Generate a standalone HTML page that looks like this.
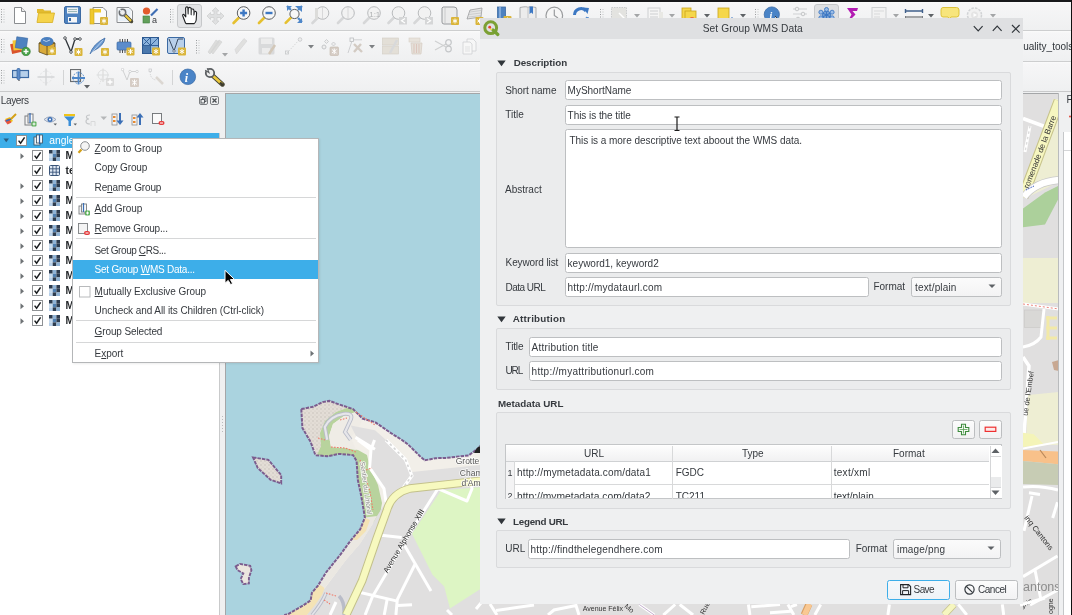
<!DOCTYPE html><html><head><meta charset="utf-8"><style>
html,body{margin:0;padding:0;width:1072px;height:615px;overflow:hidden;background:#eff0f1;font-family:"Liberation Sans", sans-serif;}
body>div,body>span,body>svg{position:absolute;}
span{white-space:nowrap;}
body{will-change:transform;}
</style></head><body>
<div style="left:0px;top:0px;width:1072px;height:2px;background:#18191b"></div>
<div style="left:0px;top:2px;width:1072px;height:28px;background:linear-gradient(#fbfbfb 0px,#f6f6f7 2px,#eff0f1 100%)"></div>
<div style="left:0px;top:30px;width:1072px;height:1px;background:#cdcecf"></div>
<div style="left:0px;top:31px;width:1072px;height:30px;background:linear-gradient(#fbfbfb 0px,#f6f6f7 2px,#eff0f1 100%)"></div>
<div style="left:0px;top:61px;width:1072px;height:1px;background:#cdcecf"></div>
<div style="left:0px;top:62px;width:1072px;height:29px;background:linear-gradient(#fbfbfb 0px,#f6f6f7 2px,#eff0f1 100%)"></div>
<div style="left:0px;top:91px;width:1072px;height:1px;background:#c8c9ca"></div>
<svg style="left:1px;top:9px;" width="4" height="16" viewBox="0 0 4 16"><rect x="0" y="0" width="1" height="1" fill="#9a9c9e"/><rect x="2.5" y="0" width="1" height="1" fill="#c4c6c8"/><rect x="0" y="2.5" width="1" height="1" fill="#9a9c9e"/><rect x="2.5" y="2.5" width="1" height="1" fill="#c4c6c8"/><rect x="0" y="5.0" width="1" height="1" fill="#9a9c9e"/><rect x="2.5" y="5.0" width="1" height="1" fill="#c4c6c8"/><rect x="0" y="7.5" width="1" height="1" fill="#9a9c9e"/><rect x="2.5" y="7.5" width="1" height="1" fill="#c4c6c8"/><rect x="0" y="10.0" width="1" height="1" fill="#9a9c9e"/><rect x="2.5" y="10.0" width="1" height="1" fill="#c4c6c8"/><rect x="0" y="12.5" width="1" height="1" fill="#9a9c9e"/><rect x="2.5" y="12.5" width="1" height="1" fill="#c4c6c8"/></svg>
<svg style="left:13px;top:6px;" width="14" height="19" viewBox="0 0 14 19"><path d="M1.5 1.5 H8.5 L12.5 5.5 V17.5 H1.5 Z" fill="#fff" stroke="#8a8d90" stroke-width="1"/><path d="M8.5 1.5 V5.5 H12.5" fill="#eee" stroke="#8a8d90" stroke-width="1"/></svg>
<svg style="left:36px;top:7px;" width="20" height="17" viewBox="0 0 20 17"><path d="M1 2 H7 L8.5 3.5 H15 V6 H1 Z" fill="#e2bb2f"/><path d="M2.5 6 H18.5 L16.5 15.5 H1 Z" fill="#f5d34a" stroke="#d6ae22" stroke-width="0.8"/></svg>
<svg style="left:64px;top:6px;" width="17" height="18" viewBox="0 0 17 18"><rect x="0.5" y="0.5" width="16" height="17" rx="1.5" fill="#4e82c0" stroke="#3c6aa3"/><rect x="3" y="1.5" width="11" height="6" fill="#eceff3"/><path d="M4 3.5 H13 M4 5.5 H13" stroke="#8aa" stroke-width="0.8"/><rect x="4" y="11" width="9" height="5.5" fill="#f4f5f7"/><rect x="5" y="12" width="2" height="3" fill="#3c6aa3"/></svg>
<svg style="left:89px;top:6px;" width="20" height="20" viewBox="0 0 20 20"><path d="M4 1.5 H14 L17.5 5 V17.5 H4 Z" fill="#fbfbfb" stroke="#8a8d90"/><rect x="1" y="3" width="4" height="15" fill="#f0c92d" stroke="#c9a31c" stroke-width="0.6"/><rect x="5" y="3" width="7" height="3.5" fill="#f0c92d"/><rect x="11" y="11" width="8" height="8" rx="1" fill="#dab53a"/><path d="M15 12.5 V17.5 M12.8 13.8 L17.2 16.2 M17.2 13.8 L12.8 16.2" stroke="#fff" stroke-width="1"/></svg>
<svg style="left:116px;top:6px;" width="19" height="19" viewBox="0 0 19 19"><path d="M1 1.5 H13 L16.5 5 V16.5 H1 Z" fill="#f8f8f8" stroke="#8a8d90"/><rect x="2.5" y="3" width="12" height="12" fill="#e8f0f8"/><path d="M8 8 L15.5 15.5" stroke="#4a4836" stroke-width="3.4" stroke-linecap="round"/><path d="M8 8 L15 15" stroke="#ecc93c" stroke-width="2"/><circle cx="6.5" cy="6.5" r="3.2" fill="#eee" stroke="#6a6d70" stroke-width="1.5"/><path d="M2.5 3.8 L6.8 6.8 L3.8 2.5 Z" fill="#e8f0f8"/></svg>
<svg style="left:142px;top:6px;" width="17" height="19" viewBox="0 0 17 19"><circle cx="4.5" cy="5" r="3.6" fill="#e35b2c"/><path d="M9 9.5 L15.5 3" stroke="#3f6eb4" stroke-width="2.2"/><rect x="1" y="10" width="6.5" height="7" fill="#62a05a" stroke="#3e7e3d" stroke-width="0.6"/><text x="10" y="17" font-size="9" font-family="Liberation Sans" fill="#3a3d40">a</text></svg>
<svg style="left:170px;top:9px;" width="4" height="16" viewBox="0 0 4 16"><rect x="0" y="0" width="1" height="1" fill="#9a9c9e"/><rect x="2.5" y="0" width="1" height="1" fill="#c4c6c8"/><rect x="0" y="2.5" width="1" height="1" fill="#9a9c9e"/><rect x="2.5" y="2.5" width="1" height="1" fill="#c4c6c8"/><rect x="0" y="5.0" width="1" height="1" fill="#9a9c9e"/><rect x="2.5" y="5.0" width="1" height="1" fill="#c4c6c8"/><rect x="0" y="7.5" width="1" height="1" fill="#9a9c9e"/><rect x="2.5" y="7.5" width="1" height="1" fill="#c4c6c8"/><rect x="0" y="10.0" width="1" height="1" fill="#9a9c9e"/><rect x="2.5" y="10.0" width="1" height="1" fill="#c4c6c8"/><rect x="0" y="12.5" width="1" height="1" fill="#9a9c9e"/><rect x="2.5" y="12.5" width="1" height="1" fill="#c4c6c8"/></svg>
<div style="left:177px;top:4px;width:25px;height:24px;background:#e3e4e6;border:1px solid #c6c8ca;border-radius:3px;box-sizing:border-box"></div>
<svg style="left:181px;top:5px;" width="17" height="20" viewBox="0 0 17 20"><path d="M4.5 18 L1.8 11 Q1.2 9.2 2.8 9.3 L4.8 11.8 L4.6 3.2 Q5.2 1.2 6.8 2.2 L7.2 9 L7.6 2.8 Q9.2 1.8 10.2 3.4 L10.2 9.6 L10.6 4.4 Q12.1 3.4 12.9 5.2 L12.9 10 L13.4 6.6 Q15 5.8 15.6 7.8 L15.2 15 Q14.8 17.6 13.2 18.6 L5.2 18.6 Z" fill="#fff" stroke="#1f2123" stroke-width="1.1" stroke-linejoin="round"/><path d="M7.2 9 V3.5 M10.2 9.6 V4 M12.9 10 V6" stroke="#9a9c9e" stroke-width="0.6"/></svg>
<svg style="left:206px;top:7px;" width="19" height="18" viewBox="0 0 19 18"><path d="M9.5 0.5 L13 4 H11 V7.5 H14.5 V5.5 L18 9 L14.5 12.5 V10.5 H11 V14 H13 L9.5 17.5 L6 14 H8 V10.5 H4.5 V12.5 L1 9 L4.5 5.5 V7.5 H8 V4 H6 Z" fill="#dfe0e1" stroke="#cfd0d1" stroke-width="0.8"/></svg>
<svg style="left:231px;top:5px;" width="20" height="21" viewBox="0 0 20 21"><path d="M8.064 12.536 L2.564 18.036" stroke="#e5c02f" stroke-width="2.6" stroke-linecap="round"/><circle cx="12.6" cy="8" r="6.3" fill="#f7f7f7" stroke="#5c5f62" stroke-width="1"/><path d="M12.6 4.5 V11.5 M9.1 8 H16.1" stroke="#3d78c3" stroke-width="2.4"/></svg>
<svg style="left:257px;top:5px;" width="20" height="21" viewBox="0 0 20 21"><path d="M7.464 12.536 L1.9640000000000004 18.036" stroke="#e5c02f" stroke-width="2.6" stroke-linecap="round"/><circle cx="12" cy="8" r="6.3" fill="#f7f7f7" stroke="#5c5f62" stroke-width="1"/><path d="M8.5 8 H15.5" stroke="#3d78c3" stroke-width="2.4"/></svg>
<svg style="left:283px;top:5px;" width="21" height="21" viewBox="0 0 21 21"><path d="M4 1 H9 L4 6 Z M12 1 H19 V7 Z M19 13 V18 H14 Z" fill="#4e87c9"/><path d="M4 1 V6" stroke="#4e87c9" stroke-width="0"/><path d="M8.188 12.312 L2.6880000000000006 17.811999999999998" stroke="#e5c02f" stroke-width="2.6" stroke-linecap="round"/><circle cx="11.5" cy="9" r="4.6" fill="#f7f7f7" stroke="#5c5f62" stroke-width="1"/><path d="M4 1 L8 5" stroke="#4e87c9" stroke-width="2.2"/><path d="M19 1 L15 5 M19 17 L15 13" stroke="#4e87c9" stroke-width="2.2"/></svg>
<svg style="left:309px;top:5px;" width="21" height="21" viewBox="0 0 21 21"><path d="M8.964 12.536 L3.4640000000000004 18.036" stroke="#d6d7d8" stroke-width="2.6" stroke-linecap="round"/><circle cx="13.5" cy="8" r="6.3" fill="#f2f2f2" stroke="#b9bbbd" stroke-width="1"/><path d="M13.5 2 V14" stroke="#d0d1d2" stroke-width="0.8"/><rect x="6" y="3" width="3" height="11" fill="#dcdcda"/></svg>
<svg style="left:335px;top:5px;" width="21" height="21" viewBox="0 0 21 21"><path d="M8.464 12.536 L2.9640000000000004 18.036" stroke="#d6d7d8" stroke-width="2.6" stroke-linecap="round"/><circle cx="13" cy="8" r="6.3" fill="#f2f2f2" stroke="#b9bbbd" stroke-width="1"/><path d="M13 2 V14" stroke="#d0d1d2" stroke-width="0.8"/></svg>
<svg style="left:361px;top:5px;" width="21" height="21" viewBox="0 0 21 21"><path d="M8.464 12.536 L2.9640000000000004 18.036" stroke="#d6d7d8" stroke-width="2.6" stroke-linecap="round"/><circle cx="13" cy="8" r="6.3" fill="#f2f2f2" stroke="#b9bbbd" stroke-width="1"/><text x="8.2" y="11.5" font-size="8" font-family="Liberation Sans" fill="#b0b2b4">1:1</text></svg>
<svg style="left:386px;top:5px;" width="21" height="21" viewBox="0 0 21 21"><path d="M7.964 12.536 L2.4640000000000004 18.036" stroke="#d6d7d8" stroke-width="2.6" stroke-linecap="round"/><circle cx="12.5" cy="8" r="6.3" fill="#f2f2f2" stroke="#b9bbbd" stroke-width="1"/><rect x="13" y="12" width="8" height="7.5" fill="#d5d6d7"/><path d="M19 13.5 L15.5 15.75 L19 18" fill="none" stroke="#fff" stroke-width="1.2"/></svg>
<svg style="left:412px;top:5px;" width="21" height="21" viewBox="0 0 21 21"><path d="M7.964 12.536 L2.4640000000000004 18.036" stroke="#d6d7d8" stroke-width="2.6" stroke-linecap="round"/><circle cx="12.5" cy="8" r="6.3" fill="#f2f2f2" stroke="#b9bbbd" stroke-width="1"/><rect x="13" y="12" width="8" height="7.5" fill="#d5d6d7"/><path d="M15 13.5 L18.5 15.75 L15 18" fill="none" stroke="#fff" stroke-width="1.2"/></svg>
<svg style="left:441px;top:6px;" width="20" height="20" viewBox="0 0 20 20"><path d="M2 1 H13 Q16 1 16 4 V16 Q16 18 13 18 H3 Q1 18 1 16 V2 Z" fill="#ebebeb" stroke="#8d9093" stroke-width="0.9"/><path d="M4 2 V17" stroke="#c9cacb" stroke-width="1"/><rect x="10" y="11" width="8" height="8" rx="1" fill="#dab53a"/><path d="M14 12.5 V17.5 M11.8 13.8 L16.2 16.2 M16.2 13.8 L11.8 16.2" stroke="#fff" stroke-width="1"/></svg>
<svg style="left:466px;top:6px;" width="18" height="20" viewBox="0 0 18 20"><path d="M4 4 L16 2 L15 11 L1 13 Z" fill="#e6e6e6" stroke="#9a9c9e" stroke-width="0.8"/><path d="M4 6 L15 4.5 M3 8.5 L15 7 M2.5 11 L15 9.5" stroke="#b8babc" stroke-width="0.6"/><rect x="9.5" y="11" width="8" height="8" rx="1" fill="#dab53a"/><path d="M13.5 12.5 V17.5 M11.3 13.8 L15.7 16.2 M15.7 13.8 L11.3 16.2" stroke="#fff" stroke-width="1"/></svg>
<svg style="left:496px;top:6px;" width="18" height="14" viewBox="0 0 18 14"><rect x="1.5" y="1" width="8" height="14" fill="#4e82c0" stroke="#3c6aa3" stroke-width="0.8"/><rect x="3" y="1" width="2" height="13" fill="#82a9d8"/><rect x="7.5" y="10" width="8" height="8" rx="1" fill="#dab53a"/><path d="M11.5 11.5 V16.5 M9.3 12.8 L13.7 15.2 M13.7 12.8 L9.3 15.2" stroke="#fff" stroke-width="1"/></svg>
<svg style="left:519px;top:6px;" width="18" height="14" viewBox="0 0 18 14"><path d="M1 1.5 Q8 0 9 1.5 Q10 0 17 1.5 V15 H1 Z" fill="#ececec" stroke="#9a9c9e" stroke-width="0.8"/><path d="M9 1.5 V15" stroke="#c2c4c6"/><path d="M10.5 0.5 H14 V8 L12.25 6.5 L10.5 8 Z" fill="#3d78c3"/></svg>
<svg style="left:545px;top:6px;" width="19" height="14" viewBox="0 0 19 14"><circle cx="9.3" cy="9.5" r="8.3" fill="#f6f6f6" stroke="#9a9c9e" stroke-width="1.2"/><path d="M9.3 3.5 V9.5 L13 12" fill="none" stroke="#9a9c9e" stroke-width="1.2"/></svg>
<svg style="left:572px;top:6px;" width="18" height="14" viewBox="0 0 18 14"><path d="M2.5 9 A6.5 6.5 0 0 1 14 5" fill="none" stroke="#3d78c3" stroke-width="3"/><path d="M11 1.5 L17 2 L15.5 8 Z" fill="#3d78c3"/><path d="M15.5 11 A6.5 6.5 0 0 1 4 14" fill="none" stroke="#5a8fd0" stroke-width="3"/></svg>
<svg style="left:600px;top:9px;" width="4" height="10" viewBox="0 0 4 10"><rect x="0" y="0" width="1" height="1" fill="#9a9c9e"/><rect x="2.5" y="0" width="1" height="1" fill="#c4c6c8"/><rect x="0" y="2.5" width="1" height="1" fill="#9a9c9e"/><rect x="2.5" y="2.5" width="1" height="1" fill="#c4c6c8"/><rect x="0" y="5.0" width="1" height="1" fill="#9a9c9e"/><rect x="2.5" y="5.0" width="1" height="1" fill="#c4c6c8"/><rect x="0" y="7.5" width="1" height="1" fill="#9a9c9e"/><rect x="2.5" y="7.5" width="1" height="1" fill="#c4c6c8"/></svg>
<svg style="left:610px;top:6px;" width="19" height="14" viewBox="0 0 19 14"><rect x="1.5" y="1.5" width="15" height="15" fill="#e3e3e0" stroke="#c5c7c9" stroke-dasharray="1.5 1" stroke-width="0.9"/><path d="M9 7 L16 14" stroke="#fff" stroke-width="1.5"/></svg>
<svg style="left:634px;top:14px;" width="7" height="4" viewBox="0 0 7 4"><path d="M0 0 L6 0 L3 3.5 Z" fill="#a3a5a7"/></svg>
<svg style="left:647px;top:7px;" width="17" height="13" viewBox="0 0 17 13"><rect x="1" y="1" width="12" height="14" fill="#f5f5f5" stroke="#cdcfd1"/><path d="M3 4 H11 M3 7 H11 M3 10 H11" stroke="#cdcfd1"/><rect x="12" y="5" width="4" height="10" fill="#e8e8e4"/></svg>
<svg style="left:669px;top:14px;" width="7" height="4" viewBox="0 0 7 4"><path d="M0 0 L6 0 L3 3.5 Z" fill="#a3a5a7"/></svg>
<svg style="left:681px;top:7px;" width="18" height="13" viewBox="0 0 18 13"><rect x="1" y="1" width="9" height="13" fill="#f5d74a" stroke="#c9a31c" stroke-width="0.8"/><rect x="4" y="4" width="11" height="11" fill="#f5d74a" stroke="#c9a31c" stroke-width="0.8"/><circle cx="11" cy="14" r="3" fill="none" stroke="#e53d3d" stroke-width="1.3"/></svg>
<svg style="left:704px;top:14px;" width="7" height="4" viewBox="0 0 7 4"><path d="M0 0 L6 0 L3 3.5 Z" fill="#5e6266"/></svg>
<svg style="left:717px;top:7px;" width="20" height="13" viewBox="0 0 20 13"><rect x="1" y="1" width="11" height="14" fill="#f5d74a" stroke="#c9a31c" stroke-width="0.8"/><path d="M12 14 L15 11 L18 14" fill="none" stroke="#3d78c3" stroke-width="1.5"/></svg>
<svg style="left:740px;top:14px;" width="7" height="4" viewBox="0 0 7 4"><path d="M0 0 L6 0 L3 3.5 Z" fill="#5e6266"/></svg>
<svg style="left:755px;top:9px;" width="4" height="10" viewBox="0 0 4 10"><rect x="0" y="0" width="1" height="1" fill="#9a9c9e"/><rect x="2.5" y="0" width="1" height="1" fill="#c4c6c8"/><rect x="0" y="2.5" width="1" height="1" fill="#9a9c9e"/><rect x="2.5" y="2.5" width="1" height="1" fill="#c4c6c8"/><rect x="0" y="5.0" width="1" height="1" fill="#9a9c9e"/><rect x="2.5" y="5.0" width="1" height="1" fill="#c4c6c8"/><rect x="0" y="7.5" width="1" height="1" fill="#9a9c9e"/><rect x="2.5" y="7.5" width="1" height="1" fill="#c4c6c8"/></svg>
<svg style="left:763px;top:6px;" width="18" height="14" viewBox="0 0 18 14"><circle cx="8.8" cy="8.5" r="7.6" fill="#4a84c7" stroke="#3a6aa5" stroke-width="0.8"/><text x="6.5" y="13" font-size="10" font-weight="bold" font-style="italic" font-family="Liberation Serif" fill="#fff">i</text><path d="M12 10 L17 15 L13 14" fill="#fff" stroke="#222" stroke-width="0.8"/></svg>
<svg style="left:791px;top:6px;" width="18" height="14" viewBox="0 0 18 14"><path d="M2 3 H16 M2 8 H16 M2 13 H16" stroke="#cfd1d3" stroke-width="1"/><circle cx="6" cy="3" r="1.8" fill="#f0f0f0" stroke="#c5c7c9"/><circle cx="12" cy="8" r="1.8" fill="#f0f0f0" stroke="#c5c7c9"/><circle cx="7" cy="13" r="1.8" fill="#f0f0f0" stroke="#c5c7c9"/></svg>
<div style="left:814px;top:3.5px;width:24.5px;height:24px;background:#dfe0e2;border:1px solid #c6c8ca;border-radius:3px;box-sizing:border-box"></div>
<svg style="left:817px;top:5px;" width="19" height="15" viewBox="0 0 19 15"><circle cx="9.5" cy="10" r="4" fill="#7ea6d8" stroke="#3d78c3" stroke-width="1"/><path d="M9.5 10 L9.5 4.5" stroke="#3d78c3" stroke-width="1.2"/><circle cx="9.5" cy="4.5" r="2" fill="#9bbce6" stroke="#3d78c3" stroke-width="0.9"/><path d="M9.5 10 L15.1 7.2" stroke="#3d78c3" stroke-width="1.2"/><circle cx="15.1" cy="7.2" r="2" fill="#9bbce6" stroke="#3d78c3" stroke-width="0.9"/><path d="M9.5 10 L15.1 12.8" stroke="#3d78c3" stroke-width="1.2"/><circle cx="15.1" cy="12.8" r="2" fill="#9bbce6" stroke="#3d78c3" stroke-width="0.9"/><path d="M9.5 10 L9.5 15.5" stroke="#3d78c3" stroke-width="1.2"/><circle cx="9.5" cy="15.5" r="2" fill="#9bbce6" stroke="#3d78c3" stroke-width="0.9"/><path d="M9.5 10 L3.9 12.8" stroke="#3d78c3" stroke-width="1.2"/><circle cx="3.9" cy="12.8" r="2" fill="#9bbce6" stroke="#3d78c3" stroke-width="0.9"/><path d="M9.5 10 L3.9 7.2" stroke="#3d78c3" stroke-width="1.2"/><circle cx="3.9" cy="7.2" r="2" fill="#9bbce6" stroke="#3d78c3" stroke-width="0.9"/></svg>
<svg style="left:845px;top:6px;" width="15" height="14" viewBox="0 0 15 14"><path d="M2 2 H13 L12 5 H7.5 L10.5 8.5 L5 14 H3.5 L6.5 8.5 Z" fill="#b31bb3"/></svg>
<svg style="left:871px;top:6px;" width="17" height="14" viewBox="0 0 17 14"><rect x="1" y="1.5" width="14" height="13" fill="#f2f2f2" stroke="#cfd1d3"/><path d="M3 5 H13 M3 8 H9 M3 11 H9" stroke="#d8d9da"/></svg>
<svg style="left:892.5px;top:14px;" width="7" height="4" viewBox="0 0 7 4"><path d="M0 0 L6 0 L3 3.5 Z" fill="#a3a5a7"/></svg>
<svg style="left:904px;top:6px;" width="20" height="14" viewBox="0 0 20 14"><path d="M1.5 5 H18.5 M1.5 3 V7 M18.5 3 V7" stroke="#3f5f8a" stroke-width="1.4"/><rect x="1" y="10" width="18" height="6" fill="#7b7e81"/><path d="M3 10 V13 M5 10 V12 M7 10 V13 M9 10 V12 M11 10 V13 M13 10 V12 M15 10 V13 M17 10 V12" stroke="#eee" stroke-width="0.7"/></svg>
<svg style="left:928px;top:14px;" width="7" height="4" viewBox="0 0 7 4"><path d="M0 0 L6 0 L3 3.5 Z" fill="#5e6266"/></svg>
<svg style="left:940px;top:6px;" width="20" height="14" viewBox="0 0 20 14"><path d="M3 1.5 H16.5 Q19 1.5 19 4 V8.5 Q19 11 16.5 11 H11 L9.5 13 L8 11 H3 Q1 11 1 8.5 V4 Q1 1.5 3 1.5 Z" fill="#f7e57c" stroke="#d9bd2c" stroke-width="0.9"/></svg>
<svg style="left:965px;top:6px;" width="19" height="14" viewBox="0 0 19 14"><circle cx="9.5" cy="9" r="7" fill="#f1f1f1" stroke="#d1d3d5" stroke-width="1.5" stroke-dasharray="2.5 1.2"/><circle cx="9.5" cy="9" r="3.5" fill="#e4e4e4"/><path d="M8.5 7 L12 9 L8.5 11 Z" fill="#fff"/></svg>
<svg style="left:990px;top:14px;" width="7" height="4" viewBox="0 0 7 4"><path d="M0 0 L6 0 L3 3.5 Z" fill="#a3a5a7"/></svg>
<svg style="left:1px;top:39px;" width="4" height="15" viewBox="0 0 4 15"><rect x="0" y="0" width="1" height="1" fill="#9a9c9e"/><rect x="2.5" y="0" width="1" height="1" fill="#c4c6c8"/><rect x="0" y="2.5" width="1" height="1" fill="#9a9c9e"/><rect x="2.5" y="2.5" width="1" height="1" fill="#c4c6c8"/><rect x="0" y="5.0" width="1" height="1" fill="#9a9c9e"/><rect x="2.5" y="5.0" width="1" height="1" fill="#c4c6c8"/><rect x="0" y="7.5" width="1" height="1" fill="#9a9c9e"/><rect x="2.5" y="7.5" width="1" height="1" fill="#c4c6c8"/><rect x="0" y="10.0" width="1" height="1" fill="#9a9c9e"/><rect x="2.5" y="10.0" width="1" height="1" fill="#c4c6c8"/><rect x="0" y="12.5" width="1" height="1" fill="#9a9c9e"/><rect x="2.5" y="12.5" width="1" height="1" fill="#c4c6c8"/></svg>
<svg style="left:10px;top:36px;" width="21" height="20" viewBox="0 0 21 20"><rect x="1" y="7" width="10" height="10" fill="#d9532b" transform="rotate(-12 6 12)"/><rect x="3" y="4" width="10" height="10" fill="#f3c634" transform="rotate(-6 8 9)"/><rect x="6" y="1.5" width="11" height="11" fill="#4e82c0" stroke="#3c6aa3" stroke-width="0.6" transform="rotate(8 11.5 7)"/><circle cx="16" cy="15.5" r="4.3" fill="#4aa34a" stroke="#2f7a2f" stroke-width="0.6"/><path d="M16 13 V18 M13.5 15.5 H18.5" stroke="#fff" stroke-width="1.5"/></svg>
<svg style="left:37px;top:36px;" width="20" height="20" viewBox="0 0 20 20"><path d="M2 7 L10 4 L18 7 V16 L10 19 L2 16 Z" fill="#d9aa3a" stroke="#5a4a1e" stroke-width="0.8"/><path d="M10 10 V19 M2 7 L10 10 L18 7" stroke="#5a4a1e" stroke-width="0.8" fill="none"/><ellipse cx="10" cy="5.5" rx="6.5" ry="4.5" fill="#4a7fbf"/><path d="M6 4 Q9 7 13 4" stroke="#b8d0ec" stroke-width="1" fill="none"/><rect x="11" y="11" width="8" height="8" rx="1" fill="#dab53a"/><path d="M15 12.5 V17.5 M12.8 13.8 L17.2 16.2 M17.2 13.8 L12.8 16.2" stroke="#fff" stroke-width="1"/></svg>
<svg style="left:63px;top:36px;" width="20" height="20" viewBox="0 0 20 20"><path d="M2 2 L8 16 L12 3 L17 3" fill="none" stroke="#31363b" stroke-width="1.3"/><circle cx="2" cy="2" r="1.3" fill="#fff" stroke="#31363b" stroke-width="0.8"/><circle cx="12" cy="3" r="1.3" fill="#fff" stroke="#31363b" stroke-width="0.8"/><circle cx="17" cy="3" r="1.3" fill="#fff" stroke="#31363b" stroke-width="0.8"/><circle cx="8" cy="16" r="1.3" fill="#fff" stroke="#31363b" stroke-width="0.8"/><rect x="11.5" y="12" width="8" height="8" rx="1" fill="#dab53a"/><path d="M15.5 13.5 V18.5 M13.3 14.8 L17.7 17.2 M17.7 14.8 L13.3 17.2" stroke="#fff" stroke-width="1"/></svg>
<svg style="left:89px;top:36px;" width="20" height="20" viewBox="0 0 20 20"><path d="M1 18 Q4 8 16 2 Q15 10 4 15 Z" fill="#6b9ad2" stroke="#3c6aa3" stroke-width="0.8"/><path d="M2 17.5 L14 4" stroke="#d6e4f4" stroke-width="0.7"/><rect x="12" y="12" width="8" height="8" rx="1" fill="#dab53a"/><path d="M16 13.5 V18.5 M13.8 14.8 L18.2 17.2 M18.2 14.8 L13.8 17.2" stroke="#fff" stroke-width="1"/></svg>
<svg style="left:116px;top:37px;" width="19" height="19" viewBox="0 0 19 19"><rect x="1" y="5" width="14" height="8" rx="1" fill="#5b8ccc" stroke="#3c6aa3" stroke-width="0.7"/><path d="M4 2 V5 M6.5 2 V5 M9 2 V5 M11.5 2 V5 M4 13 V16 M6.5 13 V16 M9 13 V16" stroke="#3a3d40" stroke-width="0.9"/><rect x="10.5" y="10.5" width="8" height="8" rx="1" fill="#dab53a"/><path d="M14.5 12.0 V17.0 M12.3 13.3 L16.7 15.7 M16.7 13.3 L12.3 15.7" stroke="#fff" stroke-width="1"/></svg>
<svg style="left:142px;top:37px;" width="19" height="19" viewBox="0 0 19 19"><rect x="0.5" y="0.5" width="16" height="16" fill="#8db4dd" stroke="#2d5a92" stroke-width="1"/><path d="M8.5 0.5 V16.5 M0.5 8.5 H16.5 M1 1 L8 8 M8 1 L1 8 M9 8 L16 1" stroke="#2d5a92" stroke-width="0.9"/><rect x="1" y="9" width="7" height="7" fill="#4a78ad"/><rect x="10" y="10.5" width="8" height="8" rx="1" fill="#dab53a"/><path d="M14 12.0 V17.0 M11.8 13.3 L16.2 15.7 M16.2 13.3 L11.8 15.7" stroke="#fff" stroke-width="1"/></svg>
<svg style="left:167px;top:37px;" width="20" height="19" viewBox="0 0 20 19"><rect x="0.5" y="0.5" width="17" height="16" rx="1.5" fill="#b9d0ea" stroke="#3c6aa3" stroke-width="1"/><path d="M2 2 L7 14 L11 2 L16 2" fill="none" stroke="#3a4a60" stroke-width="1"/><circle cx="7" cy="14" r="1.2" fill="#fff" stroke="#3a4a60" stroke-width="0.7"/><rect x="11" y="10.5" width="8" height="8" rx="1" fill="#dab53a"/><path d="M15 12.0 V17.0 M12.8 13.3 L17.2 15.7 M17.2 13.3 L12.8 15.7" stroke="#fff" stroke-width="1"/></svg>
<svg style="left:196px;top:40px;" width="4" height="14" viewBox="0 0 4 14"><rect x="0" y="0" width="1" height="1" fill="#9a9c9e"/><rect x="2.5" y="0" width="1" height="1" fill="#c4c6c8"/><rect x="0" y="2.5" width="1" height="1" fill="#9a9c9e"/><rect x="2.5" y="2.5" width="1" height="1" fill="#c4c6c8"/><rect x="0" y="5.0" width="1" height="1" fill="#9a9c9e"/><rect x="2.5" y="5.0" width="1" height="1" fill="#c4c6c8"/><rect x="0" y="7.5" width="1" height="1" fill="#9a9c9e"/><rect x="2.5" y="7.5" width="1" height="1" fill="#c4c6c8"/><rect x="0" y="10.0" width="1" height="1" fill="#9a9c9e"/><rect x="2.5" y="10.0" width="1" height="1" fill="#c4c6c8"/><rect x="0" y="12.5" width="1" height="1" fill="#9a9c9e"/><rect x="2.5" y="12.5" width="1" height="1" fill="#c4c6c8"/></svg>
<svg style="left:207px;top:37px;" width="19" height="19" viewBox="0 0 19 19"><path d="M3 17 L1 15 L9 3 L12 5 Z M6 17 L4 15 L12 3 L15 5 Z" fill="#dcdcdb" stroke="#d0d1d2" stroke-width="0.6"/></svg>
<svg style="left:221.5px;top:53px;" width="7" height="4" viewBox="0 0 7 4"><path d="M0 0 L6 0 L3 3.5 Z" fill="#a3a5a7"/></svg>
<svg style="left:234px;top:37px;" width="15" height="19" viewBox="0 0 15 19"><path d="M2.5 17 L1 12.5 L10 1.5 L13 4 Z" fill="#e0e0df" stroke="#d3d4d5" stroke-width="0.6"/></svg>
<svg style="left:258px;top:37px;" width="19" height="19" viewBox="0 0 19 19"><rect x="0.5" y="0.5" width="16" height="17" rx="1.5" fill="#d9dadb"/><rect x="3" y="1.5" width="11" height="5.5" fill="#ececec"/><rect x="4" y="11" width="8" height="5.5" fill="#ececec"/><path d="M11 17 L17 8" stroke="#d2c7b8" stroke-width="2.5"/></svg>
<svg style="left:285px;top:37px;" width="18" height="18" viewBox="0 0 18 18"><path d="M2 16 L15 2" stroke="#cfd0d1" stroke-width="0.8" stroke-dasharray="1.5 1.2"/><rect x="0.5" y="14" width="3" height="3" fill="none" stroke="#c5c7c9" stroke-width="0.8"/><circle cx="15" cy="2.5" r="1.8" fill="#eee" stroke="#c5c7c9" stroke-width="0.8"/></svg>
<svg style="left:308px;top:45px;" width="7" height="4" viewBox="0 0 7 4"><path d="M0 0 L6 0 L3 3.5 Z" fill="#7d8083"/></svg>
<svg style="left:320px;top:37px;" width="19" height="19" viewBox="0 0 19 19"><circle cx="4" cy="10" r="2" fill="#eee" stroke="#c5c7c9"/><path d="M6.5 2.5 L8.5 4.5 L6.5 6.5 L4.5 4.5 Z M13.5 5 L15.5 7 L13.5 9 L11.5 7 Z" fill="#eee" stroke="#c5c7c9" stroke-width="0.8"/><rect x="10" y="10" width="8.5" height="8.5" rx="1" fill="#d6cdc6" stroke="#c4b8ad" stroke-width="0.6"/><path d="M14.25 11.5 V17 M12 12.5 L16.5 16 M16.5 12.5 L12 16" stroke="#fff" stroke-width="1"/></svg>
<svg style="left:347px;top:37px;" width="17" height="19" viewBox="0 0 17 19"><rect x="3" y="1" width="3.5" height="3.5" fill="none" stroke="#bbbdbf" stroke-width="0.8"/><path d="M6.5 2.8 H15 M4.8 4.5 L1 16" stroke="#c5c7c9" stroke-width="0.8"/><path d="M7 7 L15 15 M14 7 L7 15" stroke="#d3cbc3" stroke-width="2.4"/></svg>
<svg style="left:369px;top:45px;" width="7" height="4" viewBox="0 0 7 4"><path d="M0 0 L6 0 L3 3.5 Z" fill="#7d8083"/></svg>
<svg style="left:382px;top:37px;" width="18" height="18" viewBox="0 0 18 18"><rect x="0.5" y="1" width="16" height="7" fill="#e3dfd7" stroke="#d2cdc3" stroke-width="0.6"/><rect x="0.5" y="9" width="16" height="8" fill="#e3dfd7" stroke="#d2cdc3" stroke-width="0.6"/><path d="M8 16 L15 3" stroke="#d8d9da" stroke-width="2.5"/></svg>
<svg style="left:408px;top:37px;" width="16" height="18" viewBox="0 0 16 18"><rect x="1" y="1" width="11" height="4" fill="#e8e3dc" stroke="#d8cfc6" stroke-width="0.6"/><path d="M3 6 H14 L13 17 H4 Z" fill="#e5e0d9" stroke="#d6ccc2" stroke-width="0.7"/><path d="M6 7 V16 M8.5 7 V16 M11 7 V16" stroke="#d9b9b0" stroke-width="0.7"/></svg>
<svg style="left:434px;top:39px;" width="19" height="14" viewBox="0 0 19 14"><path d="M1 2 L12 8 M1 11 L12 5" stroke="#cfd0d1" stroke-width="1.1"/><circle cx="14.5" cy="3.5" r="2.8" fill="none" stroke="#c5c7c9" stroke-width="1.2"/><circle cx="14.5" cy="10" r="2.8" fill="none" stroke="#c5c7c9" stroke-width="1.2"/></svg>
<svg style="left:462px;top:38px;" width="15" height="17" viewBox="0 0 15 17"><path d="M5 1 H11 L14 4 V13 H5 Z" fill="#f7f7f7" stroke="#cfd1d3" stroke-width="0.8"/><path d="M1 4 H8 L10 6 V16 H1 Z" fill="#f7f7f7" stroke="#cfd1d3" stroke-width="0.8"/><path d="M3 9 H8 M3 11 H8 M3 13 H8" stroke="#d5d7d9" stroke-width="0.7"/></svg>
<span style="left:1017.7px;top:40.89px;font-size:10px;line-height:11.50px;font-weight:normal;color:#31363b;">quality_tools</span>
<svg style="left:1px;top:70px;" width="4" height="15" viewBox="0 0 4 15"><rect x="0" y="0" width="1" height="1" fill="#9a9c9e"/><rect x="2.5" y="0" width="1" height="1" fill="#c4c6c8"/><rect x="0" y="2.5" width="1" height="1" fill="#9a9c9e"/><rect x="2.5" y="2.5" width="1" height="1" fill="#c4c6c8"/><rect x="0" y="5.0" width="1" height="1" fill="#9a9c9e"/><rect x="2.5" y="5.0" width="1" height="1" fill="#c4c6c8"/><rect x="0" y="7.5" width="1" height="1" fill="#9a9c9e"/><rect x="2.5" y="7.5" width="1" height="1" fill="#c4c6c8"/><rect x="0" y="10.0" width="1" height="1" fill="#9a9c9e"/><rect x="2.5" y="10.0" width="1" height="1" fill="#c4c6c8"/><rect x="0" y="12.5" width="1" height="1" fill="#9a9c9e"/><rect x="2.5" y="12.5" width="1" height="1" fill="#c4c6c8"/></svg>
<svg style="left:12px;top:68px;" width="18" height="14" viewBox="0 0 18 14"><rect x="0.5" y="2.5" width="16" height="7" fill="#b7d0ea" stroke="#3c6aa3" stroke-width="1.2"/><rect x="5" y="0.5" width="3" height="11" rx="1" fill="#5b8ccc" stroke="#3c6aa3" stroke-width="0.8"/><path d="M6 12 L7 13 L8 12" stroke="#5e6266" stroke-width="0.7" fill="none"/></svg>
<svg style="left:37px;top:68px;" width="19" height="19" viewBox="0 0 19 19"><circle cx="9" cy="9" r="6" fill="none" stroke="#e3e4e5" stroke-width="1" stroke-dasharray="2 1.5"/><path d="M9 0.5 V17.5 M0.5 9 H17.5" stroke="#d5d6d7" stroke-width="1.4"/></svg>
<div style="left:62.5px;top:70px;width:1px;height:15px;background:#d3d4d5"></div>
<svg style="left:70px;top:69px;" width="20" height="19" viewBox="0 0 20 19"><rect x="0.5" y="0.5" width="10" height="12" fill="none" stroke="#6a6d70" stroke-width="1.2"/><circle cx="8.5" cy="9" r="5.5" fill="none" stroke="#4e87c9" stroke-width="1" stroke-dasharray="1.5 1"/><path d="M8.5 2.5 V15.5 M2 9 H15" stroke="#4e87c9" stroke-width="1.8"/></svg>
<svg style="left:84px;top:84.5px;" width="7" height="4" viewBox="0 0 7 4"><path d="M0 0 L6 0 L3 3.5 Z" fill="#5e6266"/></svg>
<svg style="left:96px;top:68px;" width="19" height="19" viewBox="0 0 19 19"><circle cx="7" cy="7" r="5" fill="none" stroke="#dfe0e1" stroke-width="1"/><path d="M7 0.5 V14 M0.5 7 H13" stroke="#dcdddd" stroke-width="1.2"/><path d="M7 8 L3 17" stroke="#e0e0e0" stroke-dasharray="1.5 1"/><rect x="10" y="10" width="8" height="8" rx="1" fill="#dcdcdc"/><path d="M14 11.5 V16.5 M11.5 14 H16.5" stroke="#fff" stroke-width="1.4"/></svg>
<svg style="left:121px;top:68px;" width="19" height="19" viewBox="0 0 19 19"><path d="M1.5 1.5 L6 12 L9 3.5 H16" fill="none" stroke="#d0d1d2" stroke-width="1"/><circle cx="1.5" cy="1.5" r="1.2" fill="#fff" stroke="#c5c7c9" stroke-width="0.7"/><circle cx="9" cy="3.5" r="1.2" fill="#fff" stroke="#c5c7c9" stroke-width="0.7"/><circle cx="16" cy="3.5" r="1.2" fill="#fff" stroke="#c5c7c9" stroke-width="0.7"/><rect x="9" y="10" width="9" height="9" rx="1" fill="#d6cdc6"/><path d="M13.5 11.5 V17.5 M11 12.5 L16 16.5 M16 12.5 L11 16.5" stroke="#fff" stroke-width="1"/></svg>
<svg style="left:148px;top:68px;" width="17" height="19" viewBox="0 0 17 19"><rect x="1" y="1" width="2.5" height="2.5" fill="none" stroke="#c5c7c9" stroke-width="0.7"/><path d="M2.2 3.5 Q2 11 8 12" fill="none" stroke="#d0d1d2" stroke-dasharray="1.2 1"/><path d="M8 9 L15 16" stroke="#dbd7d2" stroke-width="2.5"/></svg>
<div style="left:172px;top:70px;width:1px;height:15px;background:#d3d4d5"></div>
<svg style="left:179px;top:68px;" width="18" height="18" viewBox="0 0 18 18"><circle cx="8.8" cy="8.8" r="7.8" fill="#4a84c7" stroke="#3a6aa5" stroke-width="0.7"/><text x="5.8" y="13.8" font-size="12" font-weight="bold" font-style="italic" font-family="Liberation Serif" fill="#fff">i</text></svg>
<svg style="left:204px;top:67px;" width="21" height="20" viewBox="0 0 21 20"><path d="M8 8 L18.5 17.5" stroke="#4a4836" stroke-width="4.4" stroke-linecap="round"/><path d="M8 8 L18 17" stroke="#ecc93c" stroke-width="2.6"/><path d="M16 15.5 L19 18.5" stroke="#3a3a30" stroke-width="2.4"/><circle cx="6" cy="6" r="4.2" fill="#eeeeee" stroke="#5a5d60" stroke-width="1.8"/><path d="M0 2.5 L6.2 6.2 L2.5 0 Z" fill="#f1f2f3"/><path d="M1.2 3.2 L5 5.6 L3.2 1.2" fill="none" stroke="#5a5d60" stroke-width="1.1"/></svg>
<svg style="left:225px;top:93px" width="834" height="522" viewBox="225 93 834 522"><defs><pattern id="rk" width="4" height="4" patternUnits="userSpaceOnUse"><rect width="4" height="4" fill="#e3ddd6"/><circle cx="1" cy="1" r="0.7" fill="#c2bcb5"/><circle cx="3" cy="3" r="0.6" fill="#cfc9c2"/></pattern></defs><rect x="225" y="92" width="834" height="523" fill="#aad3df"/><path d="M301.3 409.1 L313 406.8 L322.5 402.1 L329.5 400.9 L339 404.4 L353.1 409.1 L362.5 418.6 L375 422.1 L391.9 433.7 L402 440 L408.2 444.6 L420 456.2 L424.9 460.3 L435.5 458.2 L446 457.9 L468.7 455.4 L478.5 448 L482 444 L482 615 L284.2 615 L288 614.3 L303.1 605.5 L310.6 600.5 L311.9 592.9 L318.2 585.3 L325.8 572.7 L340.9 553.9 L351 540 L360.2 529.3 L364.9 517.5 L361.3 496.3 L357.8 479.8 L356.6 461 L353.1 455.1 L339 453.9 L327.2 456.3 L315.4 455.1 L310.7 442.1 L302.4 428 L301.3 409.1 Z" fill="#f2efe9"/><path d="M301.3 409.1 L313 406.8 L322.5 402.1 L329.5 400.9 L339 404.4 L348 407.5 L336 412 L325 421 L320 433 L321 446 L317 455 L310.7 442.1 L302.4 428 Z" fill="url(#rk)"/><path d="M348 407.5 L353.1 409.1 L356 412 L344 416 L333 424 L329 436 L331 447 L345 448 L358 450 L367 455 L370 468 L378 485 L382 503 L379 520 L370 524 L364.9 517.5 L361.3 496.3 L357.8 479.8 L356.6 461 L353.1 455.1 L339 453.9 L327.2 456.3 L317 455 L321 446 L320 433 L325 421 L336 412 Z" fill="#b8d39d"/><path d="M331 447 L329 436 L333 424 L344 416 L356 412 L362.5 418.6 L358 430 L350.7 437 L356 450 L345 448 Z" fill="#efece6"/><path d="M350.7 425.6 L375 430.3 L386 440 L405.4 459.5 L411.9 475.7 L403 488 L386 501.7 L384 488.7 L369.6 467.6 L371 449.7 L358 440 Z" fill="#e0dfdf"/><path d="M412 472 L480 465 L482 480 L408 489 L403 488 Z" fill="#e0dfdf"/><path d="M392 500 L408.6 492 L482 484.7 L482 615 L343 615 L358 585 L372 548 L384 512 Z" fill="#e0dfdf"/><path d="M386 501.7 L383 515 L372 548 L358 585 L343 615 L306.9 615 L323.2 590.4 L346 560 L360 543.8 L372 525 L377 516 Z" fill="#e0dfdf"/><path d="M364.9 517.5 L377 516 L372 525 L360 543.8 L346 560 L324.5 587.9 L318.2 585.3 L325.8 572.7 L340.9 553.9 L351 540 L360.2 529.3 Z" fill="#ebe8e2"/><path d="M364.9 517.5 L370 520 L366 531 L357 540 L351 540 L360.2 529.3 Z" fill="#f4e3b5"/><path d="M320.7 585.3 L324.5 588 L322 595 L315 605 L306.9 615 L284.2 615 L288 614.3 L303.1 605.5 L310.6 600.5 L311.9 592.9 L318.2 585.3 Z" fill="#f4e3b5"/><path d="M441 490.4 L482 487 L482 588 L450 608.4 L444.2 586.5 L432.5 574.8 L412 533.8 Z" fill="#ddf5c4"/><path d="M253 457.4 L268.3 459.8 L281.2 475.1 L281.2 483.4 L270.6 479.8 L257.7 468 Z" fill="url(#rk)" stroke="#7b5c8e" stroke-width="1.9" stroke-dasharray="3.5 1"/><path d="M235.7 566.4 L240.1 563.9 L250.2 565.8 L251.4 570.2 L248.9 577.8 L248.9 583.5 L243.3 584.1 L240.7 579 L243.3 573.4 L237.6 570.2 Z" fill="#ebe6df" stroke="#7b5c8e" stroke-width="1.9" stroke-dasharray="3.5 1"/><path d="M301.3 409.1 L313 406.8 L322.5 402.1 L329.5 400.9 L339 404.4 L353.1 409.1 L362.5 418.6 L375 422.1 L391.9 433.7 L402 440 L408.2 444.6 L420 456.2 L424.9 460.3 L435.5 458.2 L446 457.9 L468.7 455.4 L478.5 448 L482 444" fill="none" stroke="#7b5c8e" stroke-width="2" stroke-dasharray="3.5 1"/><path d="M301.3 409.1 L302.4 428 L310.7 442.1 L315.4 455.1 L327.2 456.3 L339 453.9 L353.1 455.1 L356.6 461 L357.8 479.8 L361.3 496.3 L364.9 517.5 L360.2 529.3 L351 540 L340.9 553.9 L325.8 572.7 L318.2 585.3 L311.9 592.9 L310.6 600.5 L303.1 605.5 L288 614.3 L284.2 615" fill="none" stroke="#7b5c8e" stroke-width="2" stroke-dasharray="3.5 1"/><path d="M327.2 439.8 L324.8 427 Q330 416 343.7 413.8 Q353 413 351 419 L345 432 L350.7 439.8" fill="none" stroke="#b9bcc8" stroke-width="4"/><path d="M327.2 439.8 L324.8 427 Q330 416 343.7 413.8 Q353 413 351 419 L345 432 L350.7 439.8" fill="none" stroke="#e6e6ea" stroke-width="2.2"/><path d="M326 593 Q322 603 312 615" fill="none" stroke="#b9bcc8" stroke-width="3.5"/><path d="M326 593 Q322 603 312 615" fill="none" stroke="#e3e3e8" stroke-width="1.8"/><path d="M339 596 Q345 602 344 615" fill="none" stroke="#b9bcc8" stroke-width="3.5"/><path d="M358 440 L371 449.7 L369.6 467.6 L384 488.7 L386 501.7" fill="none" stroke="#ffffff" stroke-width="3" stroke-linejoin="round"/><path d="M371 449.7 L374.5 440" fill="none" stroke="#ffffff" stroke-width="3" stroke-linejoin="round"/><path d="M355.5 437.4 L375 449.2" fill="none" stroke="#ffffff" stroke-width="3" stroke-linejoin="round"/><path d="M437.9 488.7 L414.9 525 L372.4 596.7 L365.1 615" fill="none" stroke="#ffffff" stroke-width="3" stroke-linejoin="round"/><path d="M437.9 488.7 L467 501 L472 488.7 L471 484" fill="none" stroke="#ffffff" stroke-width="3" stroke-linejoin="round"/><path d="M381.2 535.2 L401.7 537.4" fill="none" stroke="#ffffff" stroke-width="3" stroke-linejoin="round"/><path d="M404.6 545.5 L431 590.9" fill="none" stroke="#ffffff" stroke-width="3" stroke-linejoin="round"/><path d="M414.9 564.5 L397.3 599.6 L395.9 615" fill="none" stroke="#ffffff" stroke-width="3" stroke-linejoin="round"/><path d="M359.3 592.3 L397.3 601.1" fill="none" stroke="#ffffff" stroke-width="3" stroke-linejoin="round"/><path d="M397.3 605.5 L412 604.8" fill="none" stroke="#ffffff" stroke-width="3" stroke-linejoin="round"/><path d="M387.1 599.6 L384.2 615" fill="none" stroke="#ffffff" stroke-width="3" stroke-linejoin="round"/><path d="M447 610 L452 615" fill="none" stroke="#ffffff" stroke-width="3" stroke-linejoin="round"/><path d="M336 602 L330 615" fill="none" stroke="#ffffff" stroke-width="3" stroke-linejoin="round"/><path d="M386 440 L405.4 459.5 L411.9 475.7 L403 488" fill="none" stroke="#ffffff" stroke-width="3.2"/><path d="M386 440 L405.4 459.5 L411.9 475.7 L403 488" fill="none" stroke="#d5d5d5" stroke-width="1.6" stroke-dasharray="2.5 3"/><path d="M331 447 L345 448 L356 452 M318 438 L325 440 M356 412 L375 425 M360 460 L365 475 L370 492 L373 510 M366 470 L372 468 M340 420 L347 418" fill="none" stroke="#f07a6a" stroke-width="1.1" stroke-dasharray="1.6 1.4"/><path d="M326 593 L336 596 M324 600 L330 604" fill="none" stroke="#f07a6a" stroke-width="1.1" stroke-dasharray="1.6 1.4"/><path d="M482 480.6 L410 488.5 Q392 493 387 510 L376.8 538.2 L362.2 580.6 L346.1 615" fill="none" stroke="#c3c18a" stroke-width="8.5"/><path d="M482 480.6 L410 488.5 Q392 493 387 510 L376.8 538.2 L362.2 580.6 L346.1 615" fill="none" stroke="#f7f9bf" stroke-width="6.5"/><text x="0" y="0" transform="translate(455.7 464.4) rotate(0)" font-size="8.5" font-family="Liberation Sans" fill="#555" stroke="#fff" stroke-width="1.6" stroke-opacity="0.8" paint-order="stroke">Grotte</text><text x="0" y="0" transform="translate(459.8 475.7) rotate(0)" font-size="8.5" font-family="Liberation Sans" fill="#555" stroke="#fff" stroke-width="1.6" stroke-opacity="0.8" paint-order="stroke">Cham</text><text x="0" y="0" transform="translate(461.4 486.3) rotate(0)" font-size="8.5" font-family="Liberation Sans" fill="#555" stroke="#fff" stroke-width="1.6" stroke-opacity="0.8" paint-order="stroke">d'Am</text><text x="0" y="0" transform="translate(387.5 573.5) rotate(-59.3)" font-size="7.6" font-family="Liberation Sans" fill="#222">Avenue Alphonse XIII</text><text x="0" y="0" transform="translate(360 462) rotate(82)" font-size="6.8" font-family="Liberation Sans" fill="#8e8e8e" stroke="#fff" stroke-width="1.6" stroke-opacity="0.8" paint-order="stroke">Sentier du Littoral</text><path d="M474 453 Q477 446 481 446 L481 453 Z" fill="#222"/><rect x="1023" y="92" width="36" height="523" fill="#e0dfdf"/><path d="M1053 99 L1059 99 L1059 182 L1030 196 Z" fill="#eeeed3"/><path d="M1023 118.5 L1046 127" stroke="#fff" stroke-width="3.5"/><path d="M1030 126 L1025 152" stroke="#fff" stroke-width="3"/><path d="M1030 126 L1025 152" stroke="#dcdcdc" stroke-width="1.4" stroke-dasharray="2.5 3"/><path d="M1059 101 L1023 197" stroke="#c6c28a" stroke-width="11"/><path d="M1059 101 L1023 197" stroke="#f6f6c0" stroke-width="9"/><path d="M1023 208.5 L1045 192.4 L1059 185.6 L1059 197.7 L1045 224.6 L1023 227.2 Z" fill="#acd09b"/><path d="M1024 197 Q1035 182 1059 180" fill="none" stroke="#c9c9c9" stroke-width="8"/><path d="M1024 197 Q1035 182 1059 180" fill="none" stroke="#fff" stroke-width="6.5"/><path d="M1026 190 L1034 186" stroke="#3b5cc4" stroke-width="1" stroke-dasharray="1.5 1"/><text x="0" y="0" transform="translate(1028.5 189) rotate(-69)" font-size="8" font-family="Liberation Sans" fill="#333">romenade de la Barre</text><rect x="1023" y="258" width="36" height="45" fill="#eeeed3"/><path d="M1023 304 L1059 309" stroke="#fff" stroke-width="3"/><path d="M1023 304 L1059 309" stroke="#e8665a" stroke-width="0.8" stroke-dasharray="2 2"/><rect x="1024.5" y="310" width="18" height="17.5" fill="#d9d8d6" stroke="#c8c7c5" stroke-width="0.6"/><path d="M1044 309 L1041 337 Q1035 345 1023 347" fill="none" stroke="#fff" stroke-width="3"/><path d="M1046 318 L1057 318 M1046 328 L1057 328 M1046 338 L1057 338 M1048 316 V340" stroke="#f2e9a8" stroke-width="3"/><path d="M1052 362 L1059 360 L1059 371 L1054 370 Z" fill="#c8a892"/><path d="M1023 357 L1029 366 L1024 435" fill="none" stroke="#fff" stroke-width="3.5"/><path d="M1028 395 L1059 392 L1059 445 L1026 445 Z" fill="#eeeed3"/><text x="0" y="0" transform="translate(1027.5 416) rotate(-82)" font-size="7.4" font-family="Liberation Sans" fill="#333">ue de l'Embef</text><path d="M1023 432.7 L1033.7 434.2 L1044.8 445.3 L1023 447 Z" fill="#f4f4b8"/><path d="M1023 448.5 L1058 442" stroke="#fff" stroke-width="2"/><path d="M1023 450 L1058 451.6 L1058 464.3 L1023 461 Z" fill="#f8c18a"/><path d="M1040 450 L1046 458" stroke="#b9895a" stroke-width="1.2"/><path d="M1023 461 L1058 464.3 L1058 485 L1023 484 Z" fill="#c7ccb4"/><path d="M1023 487 Q1040 485 1058 490" fill="none" stroke="#fff" stroke-width="3"/><path d="M1029 492.8 L1040 494.4" fill="none" stroke="#fff" stroke-width="3"/><path d="M1032 496 L1024 530.8" fill="none" stroke="#fff" stroke-width="3"/><path d="M1057.5 502.3 L1052.7 518" fill="none" stroke="#fff" stroke-width="3"/><path d="M1023 576.6 L1057.5 556" fill="none" stroke="#fff" stroke-width="3"/><path d="M1035 570 L1041 600" fill="none" stroke="#fff" stroke-width="3"/><path d="M1030 605 L1058 590" fill="none" stroke="#fff" stroke-width="3"/><text x="0" y="0" transform="translate(1024 518) rotate(52)" font-size="7.8" font-family="Liberation Sans" fill="#333">inq Cantons</text><text x="0" y="0" transform="translate(1023 591) rotate(0)" font-size="12.5" font-family="Liberation Sans" fill="#8d8d8d">antons</text><text x="0" y="0" transform="translate(1013.6 614) rotate(-32)" font-size="7" font-family="Liberation Sans" fill="#333">Megnin</text><text x="0" y="0" transform="translate(1053 614) rotate(-90)" font-size="7" font-family="Liberation Sans" fill="#333">ogne</text><rect x="480" y="603" width="543" height="12" fill="#e0dfdf"/><path d="M476 609 L481 603" fill="none" stroke="#fff" stroke-width="3"/><path d="M490 604 L497 615" fill="none" stroke="#fff" stroke-width="3"/><path d="M496 610.5 L534 605" fill="none" stroke="#fff" stroke-width="3"/><path d="M548 615 L554 610 L576 605.5 L579 615" fill="none" stroke="#fff" stroke-width="3"/><path d="M639.4 604.5 L654.3 615" fill="none" stroke="#fff" stroke-width="3"/><path d="M675.2 604.5 L663.3 615" fill="none" stroke="#fff" stroke-width="3"/><path d="M679.7 604.5 L693.1 615" fill="none" stroke="#fff" stroke-width="3"/><path d="M748.4 604.5 L749.9 615" fill="none" stroke="#fff" stroke-width="3"/><path d="M751.3 606.7 L780 604.5" fill="none" stroke="#fff" stroke-width="3"/><path d="M770 612.7 L790.9 611.2" fill="none" stroke="#fff" stroke-width="3"/><path d="M787.9 604.5 L793.9 615" fill="none" stroke="#fff" stroke-width="3"/><path d="M790.9 606.7 L796.9 604.5" fill="none" stroke="#fff" stroke-width="3"/><path d="M820.7 604.5 L814.8 615" fill="none" stroke="#fff" stroke-width="3"/><path d="M889.4 604.5 L887.9 615" fill="none" stroke="#fff" stroke-width="3"/><path d="M958.3 604.4 L966.8 615" fill="none" stroke="#fff" stroke-width="3"/><path d="M1002.3 604.4 L1003.7 615" fill="none" stroke="#fff" stroke-width="3"/><path d="M1020 605 L1045 598" fill="none" stroke="#fff" stroke-width="3"/><path d="M639.4 604.5 L654.3 615" stroke="#b49ac0" stroke-width="0.8"/><path d="M809 604 L804 615" stroke="#d9a066" stroke-width="7"/><path d="M809.5 604 L804.5 615" stroke="#f9c892" stroke-width="5.5"/><path d="M954 604.4 L944.1 615" stroke="#c6c28a" stroke-width="7"/><path d="M954 604.4 L944.1 615" stroke="#f6f6c0" stroke-width="5.5"/><text x="0" y="0" transform="translate(582.7 610.5) rotate(0)" font-size="7" font-family="Liberation Sans" fill="#333">Avenue Félix</text><text x="0" y="0" transform="translate(624 607) rotate(40)" font-size="7" font-family="Liberation Sans" fill="#333">Mo</text><text x="0" y="0" transform="translate(704 615) rotate(-62)" font-size="7" font-family="Liberation Sans" fill="#333">Rue</text></svg>
<div style="left:225px;top:93px;width:1px;height:522px;background:#a4a6a8"></div>
<div style="left:225px;top:93px;width:834px;height:1px;background:#a4a6a8"></div>
<div style="left:1058px;top:93px;width:1px;height:522px;background:#b9bbbd"></div>
<div style="left:1059px;top:92px;width:12px;height:523px;background:#eff0f1"></div>
<div style="left:1063px;top:132px;width:8px;height:483px;background:#ffffff;border-left:1px solid #c5c7c9;box-sizing:border-box"></div>
<div style="left:1064px;top:150px;width:7px;height:1px;background:#d5d6d8"></div>
<span style="left:1066.5px;top:94.28px;font-size:10px;line-height:11.50px;font-weight:normal;color:#363a3f;">F</span>
<svg style="left:1068px;top:114px;" width="4" height="5" viewBox="0 0 4 5"><circle cx="2" cy="2.5" r="1" fill="#e0463a"/></svg>
<div style="left:0px;top:92px;width:220px;height:523px;background:#eff0f1"></div>
<span style="left:0.7px;top:94.78px;font-size:10px;line-height:11.50px;font-weight:normal;color:#363a3f;letter-spacing:-0.336px;">Layers</span>
<svg style="left:199px;top:96px;" width="9" height="9" viewBox="0 0 9 9"><rect x="0.5" y="0.5" width="8" height="8" rx="1.5" fill="none" stroke="#7b7e81"/><rect x="3.5" y="2" width="3.5" height="3.5" fill="none" stroke="#4a4e52" stroke-width="0.9"/><rect x="2" y="3.5" width="3.5" height="3.5" fill="#eff0f1" stroke="#4a4e52" stroke-width="0.9"/></svg>
<svg style="left:210px;top:96px;" width="9" height="9" viewBox="0 0 9 9"><rect x="0.5" y="0.5" width="8" height="8" rx="1.5" fill="none" stroke="#7b7e81"/><path d="M2.5 2.5 L6.5 6.5 M6.5 2.5 L2.5 6.5" stroke="#4a4e52" stroke-width="1.3"/></svg>
<svg style="left:3px;top:112px;" width="14" height="14" viewBox="0 0 14 14"><path d="M2 7 L7 5 L10 9 L5 12 Z" fill="#f0c419"/><path d="M1.5 8.5 L6 6.5 L8.5 10.5 L4.5 12.5 Z" fill="#e8473b" opacity="0.9"/><path d="M3 9 L8 7" stroke="#3b6fb6" stroke-width="1.5"/><path d="M8 7 L13 2" stroke="#d4a017" stroke-width="2"/></svg>
<svg style="left:23px;top:112px;" width="14" height="15" viewBox="0 0 14 15"><rect x="2" y="4" width="7" height="9" fill="#f4f4f4" stroke="#7c7f82"/><rect x="5" y="2" width="5" height="9" fill="#f8f8f8" stroke="#7c7f82"/><path d="M7 1 V11" stroke="#3b6fb6" stroke-width="1.3"/><rect x="8.5" y="9.5" width="5" height="5" rx="1" fill="#5fb15d"/><path d="M11 10.5 V13.5 M9.5 12 H12.5" stroke="#fff" stroke-width="1"/></svg>
<svg style="left:43px;top:114px;" width="15" height="12" viewBox="0 0 15 12"><path d="M1 5.5 Q7 0 13 5.5 Q7 11 1 5.5 Z" fill="#dfe3ea" stroke="#8a9bb5" stroke-width="0.8"/><circle cx="7" cy="5.5" r="2.5" fill="#3b6fb6"/><circle cx="7" cy="5.5" r="1" fill="#fff"/><path d="M10.5 9.5 L14 9.5 L12.25 11.5 Z" fill="#5e6266"/></svg>
<svg style="left:63px;top:113px;" width="15" height="14" viewBox="0 0 15 14"><rect x="1" y="1" width="11" height="2.2" fill="#f0c419"/><path d="M1 3.5 L12 3.5 L8 8 L8 13 L5.5 13 L5.5 8 Z" fill="#3b8ed8"/><path d="M10.5 10.5 L14 10.5 L12.25 12.5 Z" fill="#5e6266"/></svg>
<svg style="left:84px;top:113px;" width="13" height="14" viewBox="0 0 13 14"><path d="M6 2 Q2 2 2.5 4.5 Q3 6 5 6 Q2 6 2 8.5 Q2 11 6 11" fill="none" stroke="#c5c7c9" stroke-width="1.2"/><path d="M7 13 V8.5 H11 V13" fill="none" stroke="#d8d9da" stroke-width="1"/></svg>
<svg style="left:100px;top:116px;" width="8" height="5" viewBox="0 0 8 5"><path d="M0.5 0.5 L7 0.5 L3.75 4 Z" fill="#b5b7b9"/></svg>
<svg style="left:111px;top:112px;" width="14" height="14" viewBox="0 0 14 14"><rect x="1" y="2" width="5" height="11" fill="#f4f4f4" stroke="#8d9093" stroke-width="0.8"/><rect x="2" y="4" width="2.5" height="2" fill="#e8892e"/><rect x="2" y="8" width="2.5" height="2" fill="#e8892e"/><path d="M9 1 V10" stroke="#3b6fb6" stroke-width="2"/><path d="M5.5 8.5 L9 13 L12.5 8.5 Z" fill="#3b6fb6"/></svg>
<svg style="left:131px;top:112px;" width="14" height="14" viewBox="0 0 14 14"><rect x="1" y="3" width="5" height="10" fill="#f4f4f4" stroke="#8d9093" stroke-width="0.8"/><rect x="2" y="5" width="2.5" height="2" fill="#e8892e"/><rect x="2" y="9" width="2.5" height="2" fill="#e8892e"/><path d="M9 5 V13" stroke="#3b6fb6" stroke-width="2"/><path d="M5.5 5.5 L9 1 L12.5 5.5 Z" fill="#3b6fb6"/></svg>
<svg style="left:151px;top:112px;" width="14" height="14" viewBox="0 0 14 14"><rect x="1.5" y="1.5" width="9" height="10" fill="#fafafa" stroke="#6d7073" stroke-width="0.9"/><rect x="7.5" y="9" width="6" height="4" rx="2" fill="#e53d3d"/><path d="M9 11 H12" stroke="#fff" stroke-width="1"/></svg>
<div style="left:0px;top:133px;width:219px;height:482px;background:#ffffff"></div>
<div style="left:219px;top:133px;width:1px;height:482px;background:#c9cacb"></div>
<div style="left:220px;top:92px;width:5px;height:523px;background:#eff0f1"></div>
<div style="left:222px;top:416px;width:1px;height:1px;background:#b9bbbd"></div>
<div style="left:222px;top:419px;width:1px;height:1px;background:#b9bbbd"></div>
<div style="left:222px;top:422px;width:1px;height:1px;background:#b9bbbd"></div>
<div style="left:222px;top:425px;width:1px;height:1px;background:#b9bbbd"></div>
<div style="left:222px;top:428px;width:1px;height:1px;background:#b9bbbd"></div>
<div style="left:222px;top:431px;width:1px;height:1px;background:#b9bbbd"></div>
<div style="left:0px;top:133px;width:219px;height:15px;background:#3daee9"></div>
<svg style="left:3px;top:138px;" width="7" height="5" viewBox="0 0 7 5"><path d="M0.5 0.5 L6 0.5 L3.25 4.2 Z" fill="#2a5d80"/></svg>
<svg style="left:16px;top:135px;" width="11" height="11" viewBox="0 0 11 11"><rect x="0.5" y="0.5" width="10" height="10" fill="#ffffff" stroke="#8e9194" stroke-width="1"/><path d="M2.6 5.6 L4.6 8.2 L8.6 2.4" fill="none" stroke="#1b1e20" stroke-width="1.5"/></svg>
<svg style="left:33px;top:134px;" width="11" height="12" viewBox="0 0 11 12"><rect x="1" y="3" width="6" height="8" fill="#e9f2f8" stroke="#40505e" stroke-width="0.8"/><rect x="3.5" y="1" width="6" height="8" fill="#f4f8fb" stroke="#40505e" stroke-width="0.8"/><path d="M6.5 0.5 V10" stroke="#2c5d9e" stroke-width="1.2"/></svg>
<span style="left:49.3px;top:135.31px;font-size:10.3px;line-height:11.85px;font-weight:normal;color:#ffffff;">angle</span>
<svg style="left:20px;top:152.5px;" width="5" height="7" viewBox="0 0 5 7"><path d="M0.5 0.3 L4 3.3 L0.5 6.3 Z" fill="#6e7275"/></svg>
<svg style="left:32px;top:150.0px;" width="11" height="11" viewBox="0 0 11 11"><rect x="0.5" y="0.5" width="10" height="10" fill="#ffffff" stroke="#8e9194" stroke-width="1"/><path d="M2.6 5.6 L4.6 8.2 L8.6 2.4" fill="none" stroke="#1b1e20" stroke-width="1.5"/></svg>
<svg style="left:49px;top:150.0px;" width="11" height="11" viewBox="0 0 11 11"><rect x="0.0" y="0.0" width="3.7" height="3.7" fill="#2d3b4e"/><rect x="3.7" y="0.0" width="3.7" height="3.7" fill="#8fb3d6"/><rect x="7.4" y="0.0" width="3.7" height="3.7" fill="#2d3b4e"/><rect x="0.0" y="3.7" width="3.7" height="3.7" fill="#c7dbee"/><rect x="3.7" y="3.7" width="3.7" height="3.7" fill="#4f7fb0"/><rect x="7.4" y="3.7" width="3.7" height="3.7" fill="#2d3b4e"/><rect x="0.0" y="7.4" width="3.7" height="3.7" fill="#b7d0ea"/><rect x="3.7" y="7.4" width="3.7" height="3.7" fill="#2d3b4e"/><rect x="7.4" y="7.4" width="3.7" height="3.7" fill="#8fb3d6"/></svg>
<span style="left:65.6px;top:149.81px;font-size:10.3px;line-height:11.85px;font-weight:bold;color:#232629;">M</span>
<svg style="left:32px;top:165.0px;" width="11" height="11" viewBox="0 0 11 11"><rect x="0.5" y="0.5" width="10" height="10" fill="#ffffff" stroke="#8e9194" stroke-width="1"/><path d="M2.6 5.6 L4.6 8.2 L8.6 2.4" fill="none" stroke="#1b1e20" stroke-width="1.5"/></svg>
<svg style="left:49px;top:165.0px;" width="11" height="11" viewBox="0 0 11 11"><rect x="0.5" y="0.5" width="10" height="10" rx="1" fill="#dfe8f3" stroke="#3a5579" stroke-width="1"/><path d="M3.8 0.5 V10.5 M0.5 3.8 H10.5" stroke="#3a5579" stroke-width="0.9"/><path d="M7.2 0.5 V10.5 M0.5 7.2 H10.5" stroke="#3a5579" stroke-width="0.9"/></svg>
<span style="left:65.6px;top:164.81px;font-size:10.3px;line-height:11.85px;font-weight:bold;color:#232629;">te</span>
<svg style="left:20px;top:182.5px;" width="5" height="7" viewBox="0 0 5 7"><path d="M0.5 0.3 L4 3.3 L0.5 6.3 Z" fill="#6e7275"/></svg>
<svg style="left:32px;top:180.0px;" width="11" height="11" viewBox="0 0 11 11"><rect x="0.5" y="0.5" width="10" height="10" fill="#ffffff" stroke="#8e9194" stroke-width="1"/><path d="M2.6 5.6 L4.6 8.2 L8.6 2.4" fill="none" stroke="#1b1e20" stroke-width="1.5"/></svg>
<svg style="left:49px;top:180.0px;" width="11" height="11" viewBox="0 0 11 11"><rect x="0.0" y="0.0" width="3.7" height="3.7" fill="#2d3b4e"/><rect x="3.7" y="0.0" width="3.7" height="3.7" fill="#8fb3d6"/><rect x="7.4" y="0.0" width="3.7" height="3.7" fill="#2d3b4e"/><rect x="0.0" y="3.7" width="3.7" height="3.7" fill="#c7dbee"/><rect x="3.7" y="3.7" width="3.7" height="3.7" fill="#4f7fb0"/><rect x="7.4" y="3.7" width="3.7" height="3.7" fill="#2d3b4e"/><rect x="0.0" y="7.4" width="3.7" height="3.7" fill="#b7d0ea"/><rect x="3.7" y="7.4" width="3.7" height="3.7" fill="#2d3b4e"/><rect x="7.4" y="7.4" width="3.7" height="3.7" fill="#8fb3d6"/></svg>
<span style="left:65.6px;top:179.81px;font-size:10.3px;line-height:11.85px;font-weight:bold;color:#232629;">M</span>
<svg style="left:20px;top:197.5px;" width="5" height="7" viewBox="0 0 5 7"><path d="M0.5 0.3 L4 3.3 L0.5 6.3 Z" fill="#6e7275"/></svg>
<svg style="left:32px;top:195.0px;" width="11" height="11" viewBox="0 0 11 11"><rect x="0.5" y="0.5" width="10" height="10" fill="#ffffff" stroke="#8e9194" stroke-width="1"/><path d="M2.6 5.6 L4.6 8.2 L8.6 2.4" fill="none" stroke="#1b1e20" stroke-width="1.5"/></svg>
<svg style="left:49px;top:195.0px;" width="11" height="11" viewBox="0 0 11 11"><rect x="0.0" y="0.0" width="3.7" height="3.7" fill="#2d3b4e"/><rect x="3.7" y="0.0" width="3.7" height="3.7" fill="#8fb3d6"/><rect x="7.4" y="0.0" width="3.7" height="3.7" fill="#2d3b4e"/><rect x="0.0" y="3.7" width="3.7" height="3.7" fill="#c7dbee"/><rect x="3.7" y="3.7" width="3.7" height="3.7" fill="#4f7fb0"/><rect x="7.4" y="3.7" width="3.7" height="3.7" fill="#2d3b4e"/><rect x="0.0" y="7.4" width="3.7" height="3.7" fill="#b7d0ea"/><rect x="3.7" y="7.4" width="3.7" height="3.7" fill="#2d3b4e"/><rect x="7.4" y="7.4" width="3.7" height="3.7" fill="#8fb3d6"/></svg>
<span style="left:65.6px;top:194.81px;font-size:10.3px;line-height:11.85px;font-weight:bold;color:#232629;">M</span>
<svg style="left:20px;top:212.5px;" width="5" height="7" viewBox="0 0 5 7"><path d="M0.5 0.3 L4 3.3 L0.5 6.3 Z" fill="#6e7275"/></svg>
<svg style="left:32px;top:210.0px;" width="11" height="11" viewBox="0 0 11 11"><rect x="0.5" y="0.5" width="10" height="10" fill="#ffffff" stroke="#8e9194" stroke-width="1"/><path d="M2.6 5.6 L4.6 8.2 L8.6 2.4" fill="none" stroke="#1b1e20" stroke-width="1.5"/></svg>
<svg style="left:49px;top:210.0px;" width="11" height="11" viewBox="0 0 11 11"><rect x="0.0" y="0.0" width="3.7" height="3.7" fill="#2d3b4e"/><rect x="3.7" y="0.0" width="3.7" height="3.7" fill="#8fb3d6"/><rect x="7.4" y="0.0" width="3.7" height="3.7" fill="#2d3b4e"/><rect x="0.0" y="3.7" width="3.7" height="3.7" fill="#c7dbee"/><rect x="3.7" y="3.7" width="3.7" height="3.7" fill="#4f7fb0"/><rect x="7.4" y="3.7" width="3.7" height="3.7" fill="#2d3b4e"/><rect x="0.0" y="7.4" width="3.7" height="3.7" fill="#b7d0ea"/><rect x="3.7" y="7.4" width="3.7" height="3.7" fill="#2d3b4e"/><rect x="7.4" y="7.4" width="3.7" height="3.7" fill="#8fb3d6"/></svg>
<span style="left:65.6px;top:209.81px;font-size:10.3px;line-height:11.85px;font-weight:bold;color:#232629;">M</span>
<svg style="left:20px;top:227.5px;" width="5" height="7" viewBox="0 0 5 7"><path d="M0.5 0.3 L4 3.3 L0.5 6.3 Z" fill="#6e7275"/></svg>
<svg style="left:32px;top:225.0px;" width="11" height="11" viewBox="0 0 11 11"><rect x="0.5" y="0.5" width="10" height="10" fill="#ffffff" stroke="#8e9194" stroke-width="1"/><path d="M2.6 5.6 L4.6 8.2 L8.6 2.4" fill="none" stroke="#1b1e20" stroke-width="1.5"/></svg>
<svg style="left:49px;top:225.0px;" width="11" height="11" viewBox="0 0 11 11"><rect x="0.0" y="0.0" width="3.7" height="3.7" fill="#2d3b4e"/><rect x="3.7" y="0.0" width="3.7" height="3.7" fill="#8fb3d6"/><rect x="7.4" y="0.0" width="3.7" height="3.7" fill="#2d3b4e"/><rect x="0.0" y="3.7" width="3.7" height="3.7" fill="#c7dbee"/><rect x="3.7" y="3.7" width="3.7" height="3.7" fill="#4f7fb0"/><rect x="7.4" y="3.7" width="3.7" height="3.7" fill="#2d3b4e"/><rect x="0.0" y="7.4" width="3.7" height="3.7" fill="#b7d0ea"/><rect x="3.7" y="7.4" width="3.7" height="3.7" fill="#2d3b4e"/><rect x="7.4" y="7.4" width="3.7" height="3.7" fill="#8fb3d6"/></svg>
<span style="left:65.6px;top:224.81px;font-size:10.3px;line-height:11.85px;font-weight:bold;color:#232629;">M</span>
<svg style="left:20px;top:242.5px;" width="5" height="7" viewBox="0 0 5 7"><path d="M0.5 0.3 L4 3.3 L0.5 6.3 Z" fill="#6e7275"/></svg>
<svg style="left:32px;top:240.0px;" width="11" height="11" viewBox="0 0 11 11"><rect x="0.5" y="0.5" width="10" height="10" fill="#ffffff" stroke="#8e9194" stroke-width="1"/><path d="M2.6 5.6 L4.6 8.2 L8.6 2.4" fill="none" stroke="#1b1e20" stroke-width="1.5"/></svg>
<svg style="left:49px;top:240.0px;" width="11" height="11" viewBox="0 0 11 11"><rect x="0.0" y="0.0" width="3.7" height="3.7" fill="#2d3b4e"/><rect x="3.7" y="0.0" width="3.7" height="3.7" fill="#8fb3d6"/><rect x="7.4" y="0.0" width="3.7" height="3.7" fill="#2d3b4e"/><rect x="0.0" y="3.7" width="3.7" height="3.7" fill="#c7dbee"/><rect x="3.7" y="3.7" width="3.7" height="3.7" fill="#4f7fb0"/><rect x="7.4" y="3.7" width="3.7" height="3.7" fill="#2d3b4e"/><rect x="0.0" y="7.4" width="3.7" height="3.7" fill="#b7d0ea"/><rect x="3.7" y="7.4" width="3.7" height="3.7" fill="#2d3b4e"/><rect x="7.4" y="7.4" width="3.7" height="3.7" fill="#8fb3d6"/></svg>
<span style="left:65.6px;top:239.81px;font-size:10.3px;line-height:11.85px;font-weight:bold;color:#232629;">M</span>
<svg style="left:20px;top:257.5px;" width="5" height="7" viewBox="0 0 5 7"><path d="M0.5 0.3 L4 3.3 L0.5 6.3 Z" fill="#6e7275"/></svg>
<svg style="left:32px;top:255.0px;" width="11" height="11" viewBox="0 0 11 11"><rect x="0.5" y="0.5" width="10" height="10" fill="#ffffff" stroke="#8e9194" stroke-width="1"/><path d="M2.6 5.6 L4.6 8.2 L8.6 2.4" fill="none" stroke="#1b1e20" stroke-width="1.5"/></svg>
<svg style="left:49px;top:255.0px;" width="11" height="11" viewBox="0 0 11 11"><rect x="0.0" y="0.0" width="3.7" height="3.7" fill="#2d3b4e"/><rect x="3.7" y="0.0" width="3.7" height="3.7" fill="#8fb3d6"/><rect x="7.4" y="0.0" width="3.7" height="3.7" fill="#2d3b4e"/><rect x="0.0" y="3.7" width="3.7" height="3.7" fill="#c7dbee"/><rect x="3.7" y="3.7" width="3.7" height="3.7" fill="#4f7fb0"/><rect x="7.4" y="3.7" width="3.7" height="3.7" fill="#2d3b4e"/><rect x="0.0" y="7.4" width="3.7" height="3.7" fill="#b7d0ea"/><rect x="3.7" y="7.4" width="3.7" height="3.7" fill="#2d3b4e"/><rect x="7.4" y="7.4" width="3.7" height="3.7" fill="#8fb3d6"/></svg>
<span style="left:65.6px;top:254.81px;font-size:10.3px;line-height:11.85px;font-weight:bold;color:#232629;">M</span>
<svg style="left:20px;top:272.5px;" width="5" height="7" viewBox="0 0 5 7"><path d="M0.5 0.3 L4 3.3 L0.5 6.3 Z" fill="#6e7275"/></svg>
<svg style="left:32px;top:270.0px;" width="11" height="11" viewBox="0 0 11 11"><rect x="0.5" y="0.5" width="10" height="10" fill="#ffffff" stroke="#8e9194" stroke-width="1"/><path d="M2.6 5.6 L4.6 8.2 L8.6 2.4" fill="none" stroke="#1b1e20" stroke-width="1.5"/></svg>
<svg style="left:49px;top:270.0px;" width="11" height="11" viewBox="0 0 11 11"><rect x="0.0" y="0.0" width="3.7" height="3.7" fill="#2d3b4e"/><rect x="3.7" y="0.0" width="3.7" height="3.7" fill="#8fb3d6"/><rect x="7.4" y="0.0" width="3.7" height="3.7" fill="#2d3b4e"/><rect x="0.0" y="3.7" width="3.7" height="3.7" fill="#c7dbee"/><rect x="3.7" y="3.7" width="3.7" height="3.7" fill="#4f7fb0"/><rect x="7.4" y="3.7" width="3.7" height="3.7" fill="#2d3b4e"/><rect x="0.0" y="7.4" width="3.7" height="3.7" fill="#b7d0ea"/><rect x="3.7" y="7.4" width="3.7" height="3.7" fill="#2d3b4e"/><rect x="7.4" y="7.4" width="3.7" height="3.7" fill="#8fb3d6"/></svg>
<span style="left:65.6px;top:269.81px;font-size:10.3px;line-height:11.85px;font-weight:bold;color:#232629;">M</span>
<svg style="left:20px;top:287.5px;" width="5" height="7" viewBox="0 0 5 7"><path d="M0.5 0.3 L4 3.3 L0.5 6.3 Z" fill="#6e7275"/></svg>
<svg style="left:32px;top:285.0px;" width="11" height="11" viewBox="0 0 11 11"><rect x="0.5" y="0.5" width="10" height="10" fill="#ffffff" stroke="#8e9194" stroke-width="1"/><path d="M2.6 5.6 L4.6 8.2 L8.6 2.4" fill="none" stroke="#1b1e20" stroke-width="1.5"/></svg>
<svg style="left:49px;top:285.0px;" width="11" height="11" viewBox="0 0 11 11"><rect x="0.0" y="0.0" width="3.7" height="3.7" fill="#2d3b4e"/><rect x="3.7" y="0.0" width="3.7" height="3.7" fill="#8fb3d6"/><rect x="7.4" y="0.0" width="3.7" height="3.7" fill="#2d3b4e"/><rect x="0.0" y="3.7" width="3.7" height="3.7" fill="#c7dbee"/><rect x="3.7" y="3.7" width="3.7" height="3.7" fill="#4f7fb0"/><rect x="7.4" y="3.7" width="3.7" height="3.7" fill="#2d3b4e"/><rect x="0.0" y="7.4" width="3.7" height="3.7" fill="#b7d0ea"/><rect x="3.7" y="7.4" width="3.7" height="3.7" fill="#2d3b4e"/><rect x="7.4" y="7.4" width="3.7" height="3.7" fill="#8fb3d6"/></svg>
<span style="left:65.6px;top:284.81px;font-size:10.3px;line-height:11.85px;font-weight:bold;color:#232629;">M</span>
<svg style="left:20px;top:302.5px;" width="5" height="7" viewBox="0 0 5 7"><path d="M0.5 0.3 L4 3.3 L0.5 6.3 Z" fill="#6e7275"/></svg>
<svg style="left:32px;top:300.0px;" width="11" height="11" viewBox="0 0 11 11"><rect x="0.5" y="0.5" width="10" height="10" fill="#ffffff" stroke="#8e9194" stroke-width="1"/><path d="M2.6 5.6 L4.6 8.2 L8.6 2.4" fill="none" stroke="#1b1e20" stroke-width="1.5"/></svg>
<svg style="left:49px;top:300.0px;" width="11" height="11" viewBox="0 0 11 11"><rect x="0.0" y="0.0" width="3.7" height="3.7" fill="#2d3b4e"/><rect x="3.7" y="0.0" width="3.7" height="3.7" fill="#8fb3d6"/><rect x="7.4" y="0.0" width="3.7" height="3.7" fill="#2d3b4e"/><rect x="0.0" y="3.7" width="3.7" height="3.7" fill="#c7dbee"/><rect x="3.7" y="3.7" width="3.7" height="3.7" fill="#4f7fb0"/><rect x="7.4" y="3.7" width="3.7" height="3.7" fill="#2d3b4e"/><rect x="0.0" y="7.4" width="3.7" height="3.7" fill="#b7d0ea"/><rect x="3.7" y="7.4" width="3.7" height="3.7" fill="#2d3b4e"/><rect x="7.4" y="7.4" width="3.7" height="3.7" fill="#8fb3d6"/></svg>
<span style="left:65.6px;top:299.81px;font-size:10.3px;line-height:11.85px;font-weight:bold;color:#232629;">M</span>
<svg style="left:20px;top:317.5px;" width="5" height="7" viewBox="0 0 5 7"><path d="M0.5 0.3 L4 3.3 L0.5 6.3 Z" fill="#6e7275"/></svg>
<svg style="left:32px;top:315.0px;" width="11" height="11" viewBox="0 0 11 11"><rect x="0.5" y="0.5" width="10" height="10" fill="#ffffff" stroke="#8e9194" stroke-width="1"/><path d="M2.6 5.6 L4.6 8.2 L8.6 2.4" fill="none" stroke="#1b1e20" stroke-width="1.5"/></svg>
<svg style="left:49px;top:315.0px;" width="11" height="11" viewBox="0 0 11 11"><rect x="0.0" y="0.0" width="3.7" height="3.7" fill="#2d3b4e"/><rect x="3.7" y="0.0" width="3.7" height="3.7" fill="#8fb3d6"/><rect x="7.4" y="0.0" width="3.7" height="3.7" fill="#2d3b4e"/><rect x="0.0" y="3.7" width="3.7" height="3.7" fill="#c7dbee"/><rect x="3.7" y="3.7" width="3.7" height="3.7" fill="#4f7fb0"/><rect x="7.4" y="3.7" width="3.7" height="3.7" fill="#2d3b4e"/><rect x="0.0" y="7.4" width="3.7" height="3.7" fill="#b7d0ea"/><rect x="3.7" y="7.4" width="3.7" height="3.7" fill="#2d3b4e"/><rect x="7.4" y="7.4" width="3.7" height="3.7" fill="#8fb3d6"/></svg>
<span style="left:65.6px;top:314.81px;font-size:10.3px;line-height:11.85px;font-weight:bold;color:#232629;">M</span>
<div style="left:72px;top:138px;width:247px;height:225px;background:#ffffff;border:1px solid #b4b6b8;box-sizing:border-box;box-shadow:1px 1px 2px rgba(0,0,0,0.08)"></div>
<span style="left:94.6px;top:142.98px;font-size:10px;line-height:11.50px;font-weight:normal;color:#363a3f;letter-spacing:0.019px;"><u>Z</u>oom to Group</span>
<span style="left:94.6px;top:162.28px;font-size:10px;line-height:11.50px;font-weight:normal;color:#363a3f;letter-spacing:-0.132px;">Co<u>p</u>y Group</span>
<span style="left:94.6px;top:181.78px;font-size:10px;line-height:11.50px;font-weight:normal;color:#363a3f;letter-spacing:-0.147px;">Re<u>n</u>ame Group</span>
<div style="left:76px;top:197px;width:240px;height:1px;background:#d6d7d8"></div>
<span style="left:94.6px;top:202.78px;font-size:10px;line-height:11.50px;font-weight:normal;color:#363a3f;letter-spacing:-0.096px;"><u>A</u>dd Group</span>
<span style="left:94.6px;top:223.09px;font-size:10px;line-height:11.50px;font-weight:normal;color:#363a3f;letter-spacing:-0.203px;"><u>R</u>emove Group...</span>
<div style="left:76px;top:238px;width:240px;height:1px;background:#d6d7d8"></div>
<span style="left:94.6px;top:244.69px;font-size:10px;line-height:11.50px;font-weight:normal;color:#363a3f;letter-spacing:-0.413px;">Set Group <u>C</u>RS...</span>
<div style="left:73px;top:260px;width:245px;height:19px;background:#3daee9"></div>
<span style="left:94.6px;top:263.99px;font-size:10px;line-height:11.50px;font-weight:normal;color:#ffffff;letter-spacing:-0.230px;">Set Group <u>W</u>MS Data...</span>
<svg style="left:78.5px;top:285.5px;" width="12" height="12" viewBox="0 0 12 12"><rect x="0.5" y="0.5" width="10.5" height="10.5" fill="#fff" stroke="#b8babc"/></svg>
<span style="left:94.6px;top:285.69px;font-size:10px;line-height:11.50px;font-weight:normal;color:#363a3f;letter-spacing:-0.059px;"><u>M</u>utually Exclusive Group</span>
<span style="left:94.6px;top:305.09px;font-size:10px;line-height:11.50px;font-weight:normal;color:#363a3f;letter-spacing:-0.072px;">Uncheck and All its Children (Ctrl-click)</span>
<div style="left:76px;top:320px;width:240px;height:1px;background:#d6d7d8"></div>
<span style="left:94.6px;top:326.49px;font-size:10px;line-height:11.50px;font-weight:normal;color:#363a3f;letter-spacing:-0.128px;"><u>G</u>roup Selected</span>
<div style="left:76px;top:342px;width:240px;height:1px;background:#d6d7d8"></div>
<span style="left:94.6px;top:347.89px;font-size:10px;line-height:11.50px;font-weight:normal;color:#363a3f;letter-spacing:-0.034px;">E<u>x</u>port</span>
<svg style="left:309.5px;top:350px;" width="5" height="7" viewBox="0 0 5 7"><path d="M0.5 0.5 L4 3.5 L0.5 6.5 Z" fill="#6e7275"/></svg>
<svg style="left:77px;top:141px;" width="14" height="13" viewBox="0 0 14 13"><circle cx="8" cy="5" r="4.3" fill="#f4f4f4" stroke="#8b8e91" stroke-width="1"/><path d="M4.5 8.5 L1.5 11.8" stroke="#d4a017" stroke-width="2.2"/></svg>
<svg style="left:77px;top:202px;" width="14" height="14" viewBox="0 0 14 14"><rect x="2" y="4" width="6" height="8" fill="#f4f4f4" stroke="#7c7f82" stroke-width="0.9"/><rect x="4.5" y="2" width="5" height="8" fill="#f8f8f8" stroke="#7c7f82" stroke-width="0.9"/><path d="M6.5 1 V10" stroke="#3b6fb6" stroke-width="1.2"/><rect x="8" y="8.5" width="5" height="5" rx="1" fill="#5fb15d"/><path d="M10.5 9.5 V12.5 M9 11 H12" stroke="#fff" stroke-width="1"/></svg>
<svg style="left:77px;top:222px;" width="14" height="14" viewBox="0 0 14 14"><rect x="1.5" y="1.5" width="9" height="10" fill="#f4f4f4" stroke="#7c7f82" stroke-width="0.9"/><rect x="7" y="9" width="6" height="4" rx="2" fill="#e53d3d"/><path d="M8.5 11 H11.5" stroke="#fff" stroke-width="1"/></svg>
<div style="left:480px;top:18px;width:543px;height:586px;background:#eff0f1"></div>
<div style="left:480px;top:18px;width:543px;height:21px;background:#dfe0e2"></div>
<svg style="left:482px;top:19px;" width="18" height="18" viewBox="0 0 18 18"><circle cx="8.7" cy="8.7" r="5.9" fill="none" stroke="#7ca034" stroke-width="3"/><path d="M11 11 L15.8 15.5" stroke="#76a032" stroke-width="3.2" stroke-linecap="round"/><path d="M7.5 8.2 L10.5 10.6 L8.5 11.5 Z" fill="#efd34a"/><circle cx="7.7" cy="8.2" r="1.4" fill="#e8412c"/></svg>
<span style="left:702.7px;top:22.50px;font-size:10.2px;line-height:11.73px;font-weight:normal;color:#363a3f;letter-spacing:0.093px;">Set Group WMS Data</span>
<svg style="left:973px;top:25px;" width="11" height="8" viewBox="0 0 11 8"><path d="M0.8 1.2 L5.2 5.8 L9.6 1.2" fill="none" stroke="#31363b" stroke-width="1.2"/></svg>
<svg style="left:991.5px;top:24.5px;" width="11" height="8" viewBox="0 0 11 8"><path d="M0.8 5.8 L5.2 1.2 L9.6 5.8" fill="none" stroke="#31363b" stroke-width="1.2"/></svg>
<svg style="left:1011px;top:24px;" width="10" height="10" viewBox="0 0 10 10"><path d="M1 1 L8.6 8.6 M8.6 1 L1 8.6" fill="none" stroke="#31363b" stroke-width="1.2"/></svg>
<svg style="left:497px;top:60px;" width="9" height="7" viewBox="0 0 9 7"><path d="M0.3 0.5 L8.7 0.5 L4.5 6.3 Z" fill="#31363b"/></svg>
<span style="left:513.7px;top:56.97px;font-size:9.8px;line-height:11.27px;font-weight:bold;color:#363a3f;letter-spacing:-0.046px;">Description</span>
<div style="left:496px;top:72px;width:513px;height:232px;background:#ebeced;border:1px solid #d9dadc;border-radius:2px"></div>
<span style="left:505.2px;top:84.78px;font-size:10px;line-height:11.50px;font-weight:normal;color:#363a3f;letter-spacing:-0.049px;">Short name</span>
<div style="left:565px;top:80px;width:435px;height:18px;background:#ffffff;border:1px solid #bdbfc1;border-radius:2.5px"></div>
<span style="left:567.6px;top:84.69px;font-size:10px;line-height:11.50px;font-weight:normal;color:#363a3f;letter-spacing:-0.010px;">MyShortName</span>
<span style="left:505.2px;top:109.08px;font-size:10px;line-height:11.50px;font-weight:normal;color:#363a3f;">Title</span>
<div style="left:565px;top:105px;width:435px;height:18px;background:#ffffff;border:1px solid #bdbfc1;border-radius:2.5px"></div>
<span style="left:567.6px;top:109.69px;font-size:10px;line-height:11.50px;font-weight:normal;color:#363a3f;letter-spacing:-0.048px;">This is the title</span>
<div style="left:565px;top:129px;width:435px;height:117px;background:#ffffff;border:1px solid #bdbfc1;border-radius:2.5px"></div>
<span style="left:569.4px;top:134.59px;font-size:10px;line-height:11.50px;font-weight:normal;color:#363a3f;letter-spacing:-0.037px;">This is a more descriptive text aboout the WMS data.</span>
<span style="left:505px;top:184.28px;font-size:10px;line-height:11.50px;font-weight:normal;color:#363a3f;">Abstract</span>
<span style="left:505.6px;top:256.79px;font-size:10px;line-height:11.50px;font-weight:normal;color:#363a3f;letter-spacing:-0.109px;">Keyword list</span>
<div style="left:565px;top:253px;width:435px;height:18px;background:#ffffff;border:1px solid #bdbfc1;border-radius:2.5px"></div>
<span style="left:567.6px;top:257.69px;font-size:10px;line-height:11.50px;font-weight:normal;color:#363a3f;letter-spacing:-0.003px;">keyword1, keyword2</span>
<span style="left:505.6px;top:281.79px;font-size:10px;line-height:11.50px;font-weight:normal;color:#363a3f;letter-spacing:-0.526px;">Data URL</span>
<div style="left:565px;top:277px;width:302px;height:18px;background:#ffffff;border:1px solid #bdbfc1;border-radius:2.5px"></div>
<span style="left:567.6px;top:281.69px;font-size:10px;line-height:11.50px;font-weight:normal;color:#363a3f;letter-spacing:0.210px;">http://mydataurl.com</span>
<span style="left:873.5px;top:281.29px;font-size:10px;line-height:11.50px;font-weight:normal;color:#363a3f;letter-spacing:-0.028px;">Format</span>
<div style="left:911px;top:277px;width:89px;height:18px;background:linear-gradient(#fbfbfb,#f3f3f4);border:1px solid #bdbfc1;border-radius:2.5px"></div>
<span style="left:915px;top:281.69px;font-size:10px;line-height:11.50px;font-weight:normal;color:#363a3f;letter-spacing:0.148px;">text/plain</span>
<svg style="left:988px;top:284px;" width="8" height="5" viewBox="0 0 8 5"><path d="M0.5 0.5 L7.5 0.5 L4 4 Z" fill="#5e6266"/></svg>
<svg style="left:673px;top:116px;" width="8" height="16" viewBox="0 0 8 16"><path d="M1.5 1 H6.5 M4 1 V14.5 M1.5 14.5 H6.5" stroke="#1a1a1a" stroke-width="1.2" fill="none"/></svg>
<svg style="left:497.3px;top:316px;" width="9" height="7" viewBox="0 0 9 7"><path d="M0.3 0.5 L8.7 0.5 L4.5 6.3 Z" fill="#31363b"/></svg>
<span style="left:512.8px;top:313.17px;font-size:9.8px;line-height:11.27px;font-weight:bold;color:#363a3f;letter-spacing:0.230px;">Attribution</span>
<div style="left:496px;top:328px;width:513px;height:60px;background:#ebeced;border:1px solid #d9dadc;border-radius:2px"></div>
<span style="left:505.6px;top:340.69px;font-size:10px;line-height:11.50px;font-weight:normal;color:#363a3f;letter-spacing:-0.164px;">Title</span>
<div style="left:529px;top:337px;width:471px;height:18px;background:#ffffff;border:1px solid #bdbfc1;border-radius:2.5px"></div>
<span style="left:531.6px;top:341.69px;font-size:10px;line-height:11.50px;font-weight:normal;color:#363a3f;letter-spacing:0.214px;">Attribution title</span>
<span style="left:505.6px;top:365.39px;font-size:10px;line-height:11.50px;font-weight:normal;color:#363a3f;letter-spacing:-1.202px;">URL</span>
<div style="left:529px;top:361px;width:471px;height:18px;background:#ffffff;border:1px solid #bdbfc1;border-radius:2.5px"></div>
<span style="left:531.6px;top:365.69px;font-size:10px;line-height:11.50px;font-weight:normal;color:#363a3f;letter-spacing:0.280px;">http://myattributionurl.com</span>
<span style="left:497.9px;top:397.97px;font-size:9.8px;line-height:11.27px;font-weight:bold;color:#363a3f;letter-spacing:0.022px;">Metadata URL</span>
<div style="left:496px;top:412px;width:513px;height:95px;background:#ebeced;border:1px solid #d9dadc;border-radius:2px"></div>
<div style="left:952px;top:420px;width:21px;height:17px;background:linear-gradient(#fcfcfc,#f2f2f3);border:1px solid #bcbec0;border-radius:2.5px"></div>
<svg style="left:957px;top:423px;" width="13" height="13" viewBox="0 0 13 13"><path d="M4.5 1.2 H8.5 V4.5 H11.8 V8.5 H8.5 V11.8 H4.5 V8.5 H1.2 V4.5 H4.5 Z" fill="#f4faf3" stroke="#3d8b3d" stroke-width="1.1"/><path d="M6.5 2.5 V10.5 M2.5 6.5 H10.5" stroke="#5a9e55" stroke-width="0.8"/></svg>
<div style="left:979px;top:420px;width:21px;height:17px;background:linear-gradient(#fcfcfc,#f2f2f3);border:1px solid #bcbec0;border-radius:2.5px"></div>
<svg style="left:984px;top:425px;" width="13" height="9" viewBox="0 0 13 9"><rect x="1.2" y="2.2" width="10.6" height="4.2" fill="#fdeaea" stroke="#ee3030" stroke-width="1.2"/></svg>
<div style="left:505px;top:444px;width:497px;height:55px;background:#ffffff;border:1px solid #c4c6c8;box-sizing:border-box"></div>
<div style="left:506px;top:445.5px;width:483px;height:15px;background:linear-gradient(#fdfdfd,#f1f1f2)"></div>
<div style="left:506px;top:460.5px;width:483px;height:1px;background:#cfd1d3"></div>
<div style="left:506px;top:484px;width:483px;height:1px;background:#d8d9da"></div>
<div style="left:513.5px;top:461px;width:1px;height:37px;background:#d8d9da"></div>
<div style="left:672px;top:445.5px;width:1px;height:53px;background:#d8d9da"></div>
<div style="left:831px;top:445.5px;width:1px;height:53px;background:#d8d9da"></div>
<div style="left:506px;top:461.5px;width:7.5px;height:37px;background:#f3f3f4"></div>
<span style="left:584px;top:447.79px;font-size:10px;line-height:11.50px;font-weight:normal;color:#363a3f;">URL</span>
<span style="left:742px;top:447.79px;font-size:10px;line-height:11.50px;font-weight:normal;color:#363a3f;">Type</span>
<span style="left:893px;top:447.79px;font-size:10px;line-height:11.50px;font-weight:normal;color:#363a3f;">Format</span>
<span style="left:507.5px;top:468.21px;font-size:9px;line-height:10.35px;font-weight:normal;color:#363a3f;">1</span>
<span style="left:517px;top:467.29px;font-size:10px;line-height:11.50px;font-weight:normal;color:#363a3f;letter-spacing:0.166px;">http://mymetadata.com/data1</span>
<span style="left:675.7px;top:467.29px;font-size:10px;line-height:11.50px;font-weight:normal;color:#363a3f;">FGDC</span>
<span style="left:833.7px;top:467.29px;font-size:10px;line-height:11.50px;font-weight:normal;color:#363a3f;letter-spacing:0.294px;">text/xml</span>
<div style="left:506px;top:485px;width:483px;height:13px;overflow:hidden;position:absolute"><span style="position:absolute;left:1.5px;top:6px;font-size:9px;line-height:10px;color:#31363b">2</span><span style="position:absolute;left:11px;top:6px;font-size:10.3px;line-height:11px;color:#31363b">http://mymetadata.com/data2</span><span style="position:absolute;left:169.7px;top:6px;font-size:10px;line-height:11px;color:#31363b">TC211</span><span style="position:absolute;left:327.7px;top:6px;font-size:10px;line-height:11px;color:#31363b">text/plain</span></div>
<div style="left:989.5px;top:445.5px;width:11px;height:52px;background:#ffffff;border-left:1px solid #d5d6d8"></div>
<div style="left:990.5px;top:476.5px;width:10px;height:10px;background:#eaebec"></div>
<svg style="left:990px;top:447px;" width="11" height="8" viewBox="0 0 11 8"><path d="M1.5 6 L5.5 1.5 L9.5 6 Z" fill="#5e6266"/></svg>
<svg style="left:990px;top:489px;" width="11" height="8" viewBox="0 0 11 8"><path d="M1.5 1.5 L5.5 6 L9.5 1.5 Z" fill="#5e6266"/></svg>
<div style="left:990.5px;top:455.5px;width:10px;height:1px;background:#d5d6d8"></div>
<div style="left:990.5px;top:486.5px;width:10px;height:1px;background:#d5d6d8"></div>
<svg style="left:497.2px;top:518px;" width="9" height="7" viewBox="0 0 9 7"><path d="M0.3 0.5 L8.7 0.5 L4.5 6.3 Z" fill="#31363b"/></svg>
<span style="left:513.1px;top:515.97px;font-size:9.8px;line-height:11.27px;font-weight:bold;color:#363a3f;letter-spacing:-0.281px;">Legend URL</span>
<div style="left:496px;top:530px;width:513px;height:36px;background:#ebeced;border:1px solid #d9dadc;border-radius:2px"></div>
<span style="left:505.3px;top:543.18px;font-size:10px;line-height:11.50px;font-weight:normal;color:#363a3f;">URL</span>
<div style="left:528px;top:539px;width:320px;height:18px;background:#ffffff;border:1px solid #bdbfc1;border-radius:2.5px"></div>
<span style="left:530.6px;top:543.68px;font-size:10px;line-height:11.50px;font-weight:normal;color:#363a3f;letter-spacing:0.195px;">http://findthelegendhere.com</span>
<span style="left:855.7px;top:543.18px;font-size:10px;line-height:11.50px;font-weight:normal;color:#363a3f;letter-spacing:-0.028px;">Format</span>
<div style="left:893px;top:539px;width:106px;height:18px;background:linear-gradient(#fbfbfb,#f3f3f4);border:1px solid #bdbfc1;border-radius:2.5px"></div>
<span style="left:897px;top:543.68px;font-size:10px;line-height:11.50px;font-weight:normal;color:#363a3f;letter-spacing:0.156px;">image/png</span>
<svg style="left:987px;top:546px;" width="8" height="5" viewBox="0 0 8 5"><path d="M0.5 0.5 L7.5 0.5 L4 4 Z" fill="#5e6266"/></svg>
<div style="left:887px;top:580px;width:61px;height:18px;background:linear-gradient(#f5f8fb,#eef3f7);border:1px solid #3daee9;border-radius:2.5px"></div>
<svg style="left:900px;top:584px;" width="12" height="12" viewBox="0 0 12 12"><path d="M0.6 0.6 H8.6 L10.6 2.6 V10.6 H0.6 Z" fill="none" stroke="#232629" stroke-width="1.1"/><path d="M3 0.6 V3.8 H8 V0.6" fill="none" stroke="#232629" stroke-width="1"/><path d="M2.6 10.6 V6.6 H8.6 V10.6" fill="none" stroke="#232629" stroke-width="1"/></svg>
<span style="left:913.6px;top:584.18px;font-size:10px;line-height:11.50px;font-weight:normal;color:#363a3f;letter-spacing:-0.623px;">Save</span>
<div style="left:955px;top:580px;width:61px;height:18px;background:linear-gradient(#fcfcfc,#f2f2f3);border:1px solid #bcbec0;border-radius:2.5px"></div>
<svg style="left:964px;top:584px;" width="12" height="12" viewBox="0 0 12 12"><circle cx="5.5" cy="5.5" r="4.6" fill="none" stroke="#31363b" stroke-width="1.2"/><path d="M2.3 2.3 L8.7 8.7" stroke="#31363b" stroke-width="1.2"/></svg>
<span style="left:978px;top:584.18px;font-size:10px;line-height:11.50px;font-weight:normal;color:#363a3f;letter-spacing:-0.471px;">Cancel</span>
<svg style="left:222px;top:268px;" width="16" height="20" viewBox="0 0 16 20"><path d="M3 2.3 L3 15.2 L6.2 12.4 L8.6 16.6 L10.6 15.6 L8.4 11.6 L12.6 11.5 Z" fill="#000" stroke="#fff" stroke-width="1" stroke-linejoin="round"/></svg>
<div style="left:1071px;top:0px;width:1px;height:615px;background:#111"></div>
</body></html>
